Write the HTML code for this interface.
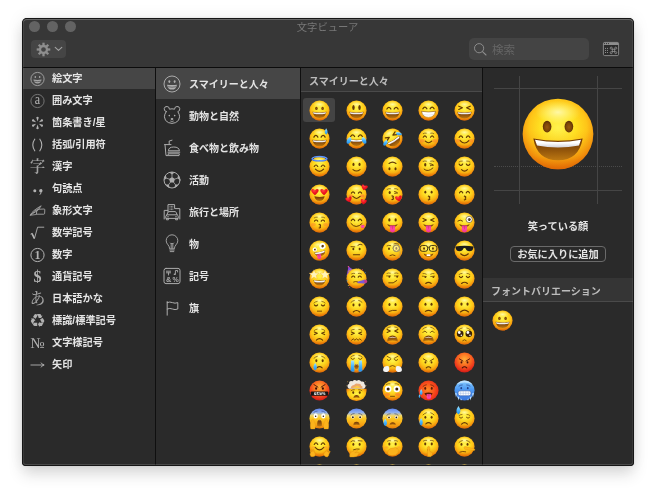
<!DOCTYPE html><html lang="ja"><head><meta charset="utf-8"><title>文字ビューア</title><style>
html,body{margin:0;padding:0;background:#fff;}
body{width:656px;height:492px;overflow:hidden;position:relative;font-family:"Liberation Sans","Noto Sans CJK JP",sans-serif;-webkit-font-smoothing:antialiased;}
#win{position:absolute;left:22px;top:18px;width:612px;height:448px;background:#2a2a2a;border-radius:5px 5px 4px 4px;
 box-shadow:0 9px 15px rgba(0,0,0,.12),0 1px 17px rgba(0,0,0,.085),0 0 3px rgba(0,0,0,.1);overflow:hidden;will-change:transform;}
#win:after{content:"";position:absolute;left:0;top:0;right:0;bottom:0;border-radius:5px 5px 4px 4px;box-shadow:inset 0 0 0 1px #161616;pointer-events:none;}
#win:before{content:"";position:absolute;z-index:5;left:1px;top:1px;right:1px;bottom:1px;border-radius:4px 4px 3px 3px;box-shadow:inset 0 1px 0 rgba(255,255,255,.24),inset 0 -1px 0 rgba(255,255,255,.15),inset 1px 0 0 rgba(255,255,255,.07),inset -1px 0 0 rgba(255,255,255,.07);pointer-events:none;}
#tb{position:absolute;left:0;top:0;width:612px;height:49px;background:#373737;border-bottom:1px solid #0c0c0c;}
.tl{position:absolute;top:3px;width:11px;height:11px;border-radius:50%;background:#636363;}
#title{position:absolute;left:0;width:611px;top:2px;height:16px;line-height:16px;text-align:center;font-size:10.3px;color:#777;}
#gear{position:absolute;left:9px;top:22px;width:35px;height:18px;border-radius:4px;background:#454545;}
#search{position:absolute;left:447px;top:20px;width:120px;height:22px;border-radius:5px;background:#444;}
#search span{position:absolute;left:23px;top:0;line-height:23.5px;font-size:11.6px;color:#656565;}
.col{position:absolute;top:50px;bottom:0;background:#2a2a2a;}
.vd{position:absolute;top:50px;bottom:0;width:1px;background:#0f0f0f;}
.li{position:absolute;left:0;height:22px;width:133px;}
.li.sel{background:#464646;height:21px;}
.li span{position:absolute;left:30px;top:0;line-height:21px;font-size:10.2px;font-weight:bold;color:#e4e4e4;white-space:nowrap;}
.li svg{position:absolute;left:5px;top:1px;}
.mi{position:absolute;left:0;height:32px;width:145px;}
.mi.sel{background:#464646;height:31px;}
.mi span{position:absolute;left:33px;top:0;line-height:33.5px;font-size:10px;font-weight:bold;color:#e4e4e4;white-space:nowrap;}
.mi svg{position:absolute;left:4.8px;top:5.2px;}
.hd{position:absolute;background:#353535;border-bottom:1px solid #4a4a4a;height:23px;line-height:27.5px;overflow:hidden;font-size:10px;font-weight:bold;color:#bcbcbc;}
.em{position:absolute;width:21px;height:21px;}
</style></head><body>
<svg width="0" height="0" style="position:absolute"><defs>
<radialGradient id="gy" cx="50%" cy="41%" r="60%"><stop offset="0" stop-color="#fff24e"/><stop offset="0.42" stop-color="#ffe022"/><stop offset="0.68" stop-color="#fec518"/><stop offset="0.86" stop-color="#f79d10"/><stop offset="1" stop-color="#e8760a"/></radialGradient>
<linearGradient id="gsh" x1="0" y1="0" x2="0" y2="1"><stop offset="0.45" stop-color="#e06a00" stop-opacity="0"/><stop offset="0.8" stop-color="#e06a00" stop-opacity="0.22"/><stop offset="1" stop-color="#d85a00" stop-opacity="0.6"/></linearGradient>
<radialGradient id="ghl" cx="50%" cy="50%" r="50%"><stop offset="0" stop-color="#ffffd0" stop-opacity="0.75"/><stop offset="1" stop-color="#ffff9a" stop-opacity="0"/></radialGradient>
<radialGradient id="gey" cx="50%" cy="55%" r="55%"><stop offset="0" stop-color="#96580c"/><stop offset="0.6" stop-color="#7a4408"/><stop offset="1" stop-color="#552a04"/></radialGradient>
<linearGradient id="gte" x1="0" y1="0" x2="0" y2="1"><stop offset="0.4" stop-color="#ffffff"/><stop offset="1" stop-color="#cfcfd8"/></linearGradient>
<linearGradient id="gm" x1="0" y1="0" x2="0" y2="1"><stop offset="0" stop-color="#713806"/><stop offset="0.5" stop-color="#8f520a"/><stop offset="1" stop-color="#bd7812"/></linearGradient>
<radialGradient id="gr" cx="50%" cy="34%" r="68%"><stop offset="0" stop-color="#ffb03a"/><stop offset="0.4" stop-color="#fb7422"/><stop offset="0.75" stop-color="#ee3a1c"/><stop offset="1" stop-color="#cc1616"/></radialGradient>
<radialGradient id="gro" cx="46%" cy="46%" r="60%"><stop offset="0" stop-color="#ff8a22"/><stop offset="0.55" stop-color="#f8501c"/><stop offset="1" stop-color="#e42318"/></radialGradient>
<linearGradient id="gb" x1="0" y1="0" x2="0" y2="1"><stop offset="0" stop-color="#86ccff"/><stop offset="0.45" stop-color="#4d99f2"/><stop offset="1" stop-color="#3b74dc"/></linearGradient>
<linearGradient id="gf" x1="0" y1="0" x2="0" y2="1"><stop offset="0" stop-color="#5f86f0"/><stop offset="0.2" stop-color="#8fb0ee"/><stop offset="0.36" stop-color="#f3d768"/><stop offset="0.5" stop-color="#fdc820"/><stop offset="0.8" stop-color="#f7a212"/><stop offset="1" stop-color="#e27a0a"/></linearGradient>
<linearGradient id="gt" x1="0" y1="0" x2="0" y2="1"><stop offset="0" stop-color="#a8e6ff"/><stop offset="0.5" stop-color="#4ab6fb"/><stop offset="1" stop-color="#1f8ef0"/></linearGradient>
<linearGradient id="gtg" x1="0" y1="0" x2="0" y2="1"><stop offset="0" stop-color="#e83a8c"/><stop offset="0.5" stop-color="#ff4aa8"/><stop offset="1" stop-color="#f0309a"/></linearGradient>
<radialGradient id="gh" cx="40%" cy="25%" r="75%"><stop offset="0" stop-color="#ff4a40"/><stop offset="0.5" stop-color="#f01522"/><stop offset="1" stop-color="#d40a1a"/></radialGradient>
</defs></svg>
<div id="win">
<div id="tb">
<div class="tl" style="left:7px"></div>
<div class="tl" style="left:25px"></div>
<div class="tl" style="left:43px"></div>
<div id="title">文字ビューア</div>
<div id="gear"><svg width="35" height="18" viewBox="0 0 35 18" style="position:absolute;left:0;top:0"><rect x="11.35" y="2.7" width="2.3" height="4" fill="#8e8e8e" transform="rotate(0 12.5 9.5)"/><rect x="11.35" y="2.7" width="2.3" height="4" fill="#8e8e8e" transform="rotate(45 12.5 9.5)"/><rect x="11.35" y="2.7" width="2.3" height="4" fill="#8e8e8e" transform="rotate(90 12.5 9.5)"/><rect x="11.35" y="2.7" width="2.3" height="4" fill="#8e8e8e" transform="rotate(135 12.5 9.5)"/><rect x="11.35" y="2.7" width="2.3" height="4" fill="#8e8e8e" transform="rotate(180 12.5 9.5)"/><rect x="11.35" y="2.7" width="2.3" height="4" fill="#8e8e8e" transform="rotate(225 12.5 9.5)"/><rect x="11.35" y="2.7" width="2.3" height="4" fill="#8e8e8e" transform="rotate(270 12.5 9.5)"/><rect x="11.35" y="2.7" width="2.3" height="4" fill="#8e8e8e" transform="rotate(315 12.5 9.5)"/><circle cx="12.5" cy="9.5" r="3.5" fill="none" stroke="#8e8e8e" stroke-width="2.3"/><path d="M24.2 7.4 L27.5 10.4 L30.8 7.4" fill="none" stroke="#a2a2a2" stroke-width="1.1" stroke-linecap="round" stroke-linejoin="round"/></svg></div>
<div id="search"><svg width="22" height="22" viewBox="0 0 22 22" style="position:absolute;left:0;top:0"><circle cx="10.1" cy="10.2" r="4.6" fill="none" stroke="#8c8c8c" stroke-width="1"/><path d="M13.5 13.6 L17 17" stroke="#8c8c8c" stroke-width="1.1" stroke-linecap="round"/></svg><span>検索</span></div>
<svg width="18" height="16" viewBox="0 0 18 16" style="position:absolute;left:580px;top:23px"><rect x="1.4" y="1.4" width="15.2" height="13.2" rx="1.3" fill="#2b2b2b" stroke="#8e8e8e" stroke-width="0.9"/><path d="M1.4 2.7 Q1.4 1.4 2.7 1.4 L15.3 1.4 Q16.6 1.4 16.6 2.7 L16.6 4.1 L1.4 4.1Z" fill="#8e8e8e"/><circle cx="2.6" cy="2.6" r="0.55" fill="#2a2a2a"/><circle cx="4.5" cy="2.6" r="0.55" fill="#2a2a2a"/><circle cx="6.4" cy="2.6" r="0.55" fill="#2a2a2a"/><rect x="3.0" y="6.9" width="1" height="1" fill="#8e8e8e"/><rect x="4.95" y="6.9" width="1" height="1" fill="#8e8e8e"/><rect x="3.0" y="8.95" width="1" height="1" fill="#8e8e8e"/><rect x="4.95" y="8.95" width="1" height="1" fill="#8e8e8e"/><rect x="3.0" y="11.0" width="1" height="1" fill="#8e8e8e"/><rect x="4.95" y="11.0" width="1" height="1" fill="#8e8e8e"/><g fill="none" stroke="#8e8e8e" stroke-width="0.85"><rect x="10.3" y="8.2" width="2.4" height="2.4"/><circle cx="9.25" cy="7.15" r="1.05"/><circle cx="13.75" cy="7.15" r="1.05"/><circle cx="9.25" cy="11.65" r="1.05"/><circle cx="13.75" cy="11.65" r="1.05"/></g></svg>
</div>
<div class="col" style="left:0;width:133px">
<div class="li sel" style="top:0px"><svg width="22" height="20" viewBox="0 0 22 20"><circle cx="10.5" cy="10" r="6.6" fill="none" stroke="#a6a6a6" stroke-width="0.9"/><ellipse cx="8.32" cy="8.02" rx="0.79" ry="1.07" fill="#a6a6a6"/><ellipse cx="12.68" cy="8.02" rx="0.79" ry="1.07" fill="#a6a6a6"/><path d="M6.41 10.53 Q10.5 11.32 14.59 10.53 Q13.93 14.62 10.5 14.62 Q7.07 14.62 6.41 10.53Z" fill="#a6a6a6"/><path d="M7.07 12.24 Q10.5 13.04 13.93 12.24" fill="none" stroke="#464646" stroke-width="0.63"/></svg><span>絵文字</span></div>
<div class="li" style="top:22px"><svg width="22" height="20" viewBox="0 0 22 20"><circle cx="10.5" cy="10" r="6.6" fill="none" stroke="#858585" stroke-width="0.8"/><text x="10.5" y="13.5" font-family="'Liberation Serif','Noto Serif CJK SC',serif" font-size="15" font-weight="normal" fill="#b8b8b8" text-anchor="middle" transform="translate(2.1 0) scale(0.8 1)">a</text></svg><span>囲み文字</span></div>
<div class="li" style="top:44px"><svg width="22" height="20" viewBox="0 0 22 20"><path d="M10.50 8.40 L11.75 4.40 Q10.50 3.00 9.25 4.40Z" fill="#b2b2b2"/><path d="M11.89 9.20 L15.97 8.28 Q16.56 6.50 14.72 6.12Z" fill="#b2b2b2"/><path d="M11.89 10.80 L14.72 13.88 Q16.56 13.50 15.97 11.72Z" fill="#b2b2b2"/><path d="M10.50 11.60 L9.25 15.60 Q10.50 17.00 11.75 15.60Z" fill="#b2b2b2"/><path d="M9.11 10.80 L5.03 11.72 Q4.44 13.50 6.28 13.88Z" fill="#b2b2b2"/><path d="M9.11 9.20 L6.28 6.12 Q4.44 6.50 5.03 8.28Z" fill="#b2b2b2"/></svg><span>箇条書き/星</span></div>
<div class="li" style="top:66px"><svg width="22" height="20" viewBox="0 0 22 20"><path d="M8 3.8 Q3.6 10 8 16.2" fill="none" stroke="#b2b2b2" stroke-width="1.1"/><path d="M12.6 3.8 Q17 10 12.6 16.2" fill="none" stroke="#b2b2b2" stroke-width="1.1"/></svg><span>括弧/引用符</span></div>
<div class="li" style="top:88px"><svg width="22" height="20" viewBox="0 0 22 20"><text x="10.5" y="15.4" font-family="'Liberation Serif','Noto Serif CJK SC',serif" font-size="15.5" font-weight="600" fill="#a2a2a2" text-anchor="middle" >字</text></svg><span>漢字</span></div>
<div class="li" style="top:110px"><svg width="22" height="20" viewBox="0 0 22 20"><circle cx="7.8" cy="11.8" r="1.5" fill="#b2b2b2"/><path d="M13.2 10.3 a1.55 1.55 0 1 1 1.5 2.8 q-0.2 1.9 -1.9 2.9 l-0.4 -0.5 q1.2 -1 1.1 -2.2 a1.55 1.55 0 0 1 -0.3 -3Z" fill="#b2b2b2"/></svg><span>句読点</span></div>
<div class="li" style="top:132px"><svg width="22" height="20" viewBox="0 0 22 20"><path d="M9.4 13.2 L9.8 9.6 Q10 8.4 11.2 8.3 L17 8 Q17.8 8 17.8 8.8 L17.6 12.4 Q17.5 13.2 16.8 13.2 Z" fill="none" stroke="#b2b2b2" stroke-width="0.8" stroke-linejoin="round"/><path d="M3.4 14 Q5.4 9.6 14.2 4.8 Q12.6 9 6.2 12.4 Z" fill="none" stroke="#b2b2b2" stroke-width="0.75" stroke-linejoin="round"/><path d="M3.4 14 L13 5.8 M5.6 11.2 L7.4 11.4 M7.6 9.6 L9.4 9.8" stroke="#b2b2b2" stroke-width="0.55"/><path d="M2.8 14.4 L9.6 13.4" stroke="#b2b2b2" stroke-width="0.7"/></svg><span>象形文字</span></div>
<div class="li" style="top:154px"><svg width="22" height="20" viewBox="0 0 22 20"><path d="M3.6 11.2 L5.2 10.4 L7.4 15.6 L10.6 4.2 L17.2 4.2" fill="none" stroke="#b2b2b2" stroke-width="0.9" stroke-linejoin="miter"/><path d="M4.9 10.5 L7.3 15.4" stroke="#b2b2b2" stroke-width="1.6"/></svg><span>数学記号</span></div>
<div class="li" style="top:176px"><svg width="22" height="20" viewBox="0 0 22 20"><circle cx="10.5" cy="10" r="6.6" fill="none" stroke="#b2b2b2" stroke-width="1"/><text x="10.5" y="14" font-family="'Liberation Serif','Noto Serif CJK SC',serif" font-size="12" font-weight="bold" fill="#b2b2b2" text-anchor="middle" >1</text></svg><span>数字</span></div>
<div class="li" style="top:198px"><svg width="22" height="20" viewBox="0 0 22 20"><text x="10.5" y="15.2" font-family="'Liberation Serif','Noto Serif CJK SC',serif" font-size="16" font-weight="bold" fill="#b2b2b2" text-anchor="middle" >$</text></svg><span>通貨記号</span></div>
<div class="li" style="top:220px"><svg width="22" height="20" viewBox="0 0 22 20"><text x="10.5" y="15.4" font-family="'Liberation Serif','Noto Serif CJK SC',serif" font-size="15.5" font-weight="500" fill="#a2a2a2" text-anchor="middle" >あ</text></svg><span>日本語かな</span></div>
<div class="li" style="top:242px"><svg width="22" height="20" viewBox="0 0 22 20"><text x="10.5" y="16.2" font-family="'DejaVu Sans',sans-serif" font-size="18.5" font-weight="normal" fill="#b0b0b0" text-anchor="middle" >♻</text></svg><span>標識/標準記号</span></div>
<div class="li" style="top:264px"><svg width="22" height="20" viewBox="0 0 22 20"><text x="10.5" y="15" font-family="'Liberation Serif','Noto Serif CJK SC',serif" font-size="15" font-weight="normal" fill="#b2b2b2" text-anchor="middle" >№</text></svg><span>文字様記号</span></div>
<div class="li" style="top:286px"><svg width="22" height="20" viewBox="0 0 22 20"><path d="M3.5 10 L17 10 M14 7.6 Q15 9.6 17.2 10 Q15 10.4 14 12.4" fill="none" stroke="#b2b2b2" stroke-width="0.9"/></svg><span>矢印</span></div>
</div><div class="vd" style="left:133px"></div>
<div class="col" style="left:134px;width:144px">
<div class="mi sel" style="top:0px"><svg width="22" height="22" viewBox="0 0 22 22"><circle cx="11" cy="11" r="8" fill="none" stroke="#b0b0b0" stroke-width="0.95"/><ellipse cx="8.36" cy="8.60" rx="0.96" ry="1.30" fill="#b0b0b0"/><ellipse cx="13.64" cy="8.60" rx="0.96" ry="1.30" fill="#b0b0b0"/><path d="M6.04 11.64 Q11 12.60 15.96 11.64 Q15.16 16.60 11 16.60 Q6.84 16.60 6.04 11.64Z" fill="#b0b0b0"/><path d="M6.84 13.72 Q11 14.68 15.16 13.72" fill="none" stroke="#464646" stroke-width="0.6649999999999999"/></svg><span>スマイリーと人々</span></div>
<div class="mi" style="top:32px"><svg width="22" height="22" viewBox="0 0 22 22" fill="none" stroke="#adadad" stroke-width="1" stroke-linejoin="round" stroke-linecap="round"><path d="M5.2 6.6 A2.6 2.6 0 1 1 8.4 4.2 Q11 3.4 13.6 4.2 A2.6 2.6 0 1 1 16.8 6.6 Q18.6 9.4 18.6 11.8 Q18.4 16 14.6 17.6 Q11 19.2 7.4 17.6 Q3.6 16 3.4 11.8 Q3.4 9.4 5.2 6.6Z"/><circle cx="8.3" cy="10.6" r="0.8" fill="#adadad" stroke="none"/><circle cx="13.7" cy="10.6" r="0.8" fill="#adadad" stroke="none"/><ellipse cx="11" cy="14" rx="1.3" ry="0.9" fill="#adadad" stroke="none"/><path d="M9.6 16.2 Q11 17 12.4 16.2" stroke-width="0.8"/></svg><span>動物と自然</span></div>
<div class="mi" style="top:64px"><svg width="22" height="22" viewBox="0 0 22 22" fill="none" stroke="#adadad" stroke-width="1" stroke-linejoin="round" stroke-linecap="round"><path d="M3.6 7.6 L10 7.6 M4 7.6 L5 18.6 L7 18.6 M8.2 7.4 L8.2 4 L11 3.2" /><path d="M7.4 13.4 Q7.6 10 12.8 10 Q18 10 18.4 13.4Z"/><path d="M7 15.2 L18.8 15.2 M7.4 16.8 L18.4 16.8 L18 18.6 L7.8 18.6Z"/></svg><span>食べ物と飲み物</span></div>
<div class="mi" style="top:96px"><svg width="22" height="22" viewBox="0 0 22 22" fill="none" stroke="#adadad" stroke-width="1" stroke-linejoin="round" stroke-linecap="round"><circle cx="11" cy="11" r="8"/><path d="M11.00 7.90 L13.95 10.04 L12.82 13.51 L9.18 13.51 L8.05 10.04Z" fill="#adadad" stroke="none"/><path d="M11.00 7.90 L11.00 5.40" stroke-width="0.8"/><path d="M8.26 3.48 L11.00 5.40 L13.74 3.48 A8 8 0 0 0 8.26 3.48Z" fill="#adadad" stroke="none"/><path d="M13.95 10.04 L16.33 9.27" stroke-width="0.8"/><path d="M17.30 6.07 L16.33 9.27 L19.00 11.28 A8 8 0 0 0 17.30 6.07Z" fill="#adadad" stroke="none"/><path d="M12.82 13.51 L14.29 15.53" stroke-width="0.8"/><path d="M17.63 15.47 L14.29 15.53 L13.21 18.69 A8 8 0 0 0 17.63 15.47Z" fill="#adadad" stroke="none"/><path d="M9.18 13.51 L7.71 15.53" stroke-width="0.8"/><path d="M8.79 18.69 L7.71 15.53 L4.37 15.47 A8 8 0 0 0 8.79 18.69Z" fill="#adadad" stroke="none"/><path d="M8.05 10.04 L5.67 9.27" stroke-width="0.8"/><path d="M3.00 11.28 L5.67 9.27 L4.70 6.07 A8 8 0 0 0 3.00 11.28Z" fill="#adadad" stroke="none"/></svg><span>活動</span></div>
<div class="mi" style="top:128px"><svg width="22" height="22" viewBox="0 0 22 22" fill="none" stroke="#adadad" stroke-width="1" stroke-linejoin="round" stroke-linecap="round"><path d="M3.2 18 L3.2 9.4 L6.8 9.4 M7 11 L7 3.6 L13.6 3.6 L13.6 7.6 L18.8 7.6 L18.8 18" /><path d="M9 5.4h0.1M10.4 5.4h0.1M11.8 5.4h0.1M9 7h0.1M10.4 7h0.1M11.8 7h0.1M9 8.6h0.1M10.4 8.6h0.1M11.8 8.6h0.1" stroke-width="0.9"/><path d="M5.6 14.2 L7 11.2 Q7.2 10.6 8 10.6 L14 10.6 Q14.8 10.6 15 11.2 L16.4 14.2 Q17.2 14.4 17.2 15.2 L17.2 17.4 L4.8 17.4 L4.8 15.2 Q4.8 14.4 5.6 14.2Z M6.4 13.8 L15.6 13.8 M5.4 17.6 L5.4 18.8 L7.4 18.8 L7.4 17.6 M14.6 17.6 L14.6 18.8 L16.6 18.8 L16.6 17.6"/><circle cx="7" cy="15.8" r="0.7" fill="#adadad" stroke="none"/><circle cx="15" cy="15.8" r="0.7" fill="#adadad" stroke="none"/></svg><span>旅行と場所</span></div>
<div class="mi" style="top:160px"><svg width="22" height="22" viewBox="0 0 22 22" fill="none" stroke="#adadad" stroke-width="1" stroke-linejoin="round" stroke-linecap="round"><path d="M8.6 15.4 Q8.6 13.6 7 11.8 A5.8 5.8 0 1 1 15 11.8 Q13.4 13.6 13.4 15.4Z M8.8 17 L13.2 17 M9.2 18.6 L12.8 18.6 M9.4 10 L10.4 11 L11 10 L11.6 11 L12.6 10 M10.2 11.2 L10.2 15.2 M11.8 11.2 L11.8 15.2" stroke-width="0.9"/></svg><span>物</span></div>
<div class="mi" style="top:192px"><svg width="22" height="22" viewBox="0 0 22 22" fill="none" stroke="#adadad" stroke-width="1" stroke-linejoin="round" stroke-linecap="round"><rect x="3" y="3.4" width="16" height="15.2" rx="2"/><path d="M5.4 6.2 L9.6 6.2 M5.4 7.8 L9.6 7.8 M7.5 7.8 L7.5 10" stroke-width="0.9"/><path d="M14.4 9.2 L14.4 5.6 L16.6 5.4 L16.6 7" stroke-width="0.9"/><ellipse cx="13.6" cy="9.3" rx="1" ry="0.8" fill="#adadad" stroke="none"/><text x="7.6" y="16.8" font-family="'Liberation Sans',sans-serif" font-size="7.4" font-weight="bold" fill="#adadad" stroke="none" text-anchor="middle">&amp;</text><text x="14.6" y="16.8" font-family="'Liberation Sans',sans-serif" font-size="7" font-weight="bold" fill="#adadad" stroke="none" text-anchor="middle">%</text></svg><span>記号</span></div>
<div class="mi" style="top:224px"><svg width="22" height="22" viewBox="0 0 22 22" fill="none" stroke="#adadad" stroke-width="1" stroke-linejoin="round" stroke-linecap="round"><path d="M6.2 4.6 L6.2 18.2 M6.2 5.6 Q8.8 4.4 11.4 5.6 Q14 6.8 16.8 5.6 L16.8 12 Q14 13.2 11.4 12 Q8.8 10.8 6.2 12"/></svg><span>旗</span></div>
</div><div class="vd" style="left:278px"></div>
<div class="col" style="left:279px;width:181px">
<div class="hd" style="left:0;top:0;width:173px;padding-left:8px">スマイリーと人々</div>
<div style="position:absolute;left:2px;top:30px;width:32px;height:24px;border-radius:3px;background:#444"></div>
<div class="em" style="left:8.40px;top:31.5px"><svg width="21" height="21" viewBox="0 0 36 36" style="overflow:visible"><circle cx="18" cy="18" r="17.2" fill="url(#gy)"/><circle cx="18" cy="18" r="17.2" fill="url(#gsh)"/><ellipse cx="18" cy="7.4" rx="11" ry="5.6" fill="url(#ghl)"/><ellipse cx="12.7" cy="14.4" rx="2.1" ry="2.9" fill="url(#gey)"/><ellipse cx="23.3" cy="14.4" rx="2.1" ry="2.9" fill="url(#gey)"/><path d="M6 20.2 Q18 22.4 30 20.2 Q28.2 30.799999999999997 18 30.799999999999997 Q7.800000000000001 30.799999999999997 6 20.2Z" fill="url(#gm)"/><path d="M6.8 20.8 Q18 23.0 29.2 20.8 L28.2 23.599999999999998 Q18 25.6 7.8 23.599999999999998Z" fill="url(#gte)"/></svg></div>
<div class="em" style="left:44.65px;top:31.5px"><svg width="21" height="21" viewBox="0 0 36 36" style="overflow:visible"><circle cx="18" cy="18" r="17.2" fill="url(#gy)"/><circle cx="18" cy="18" r="17.2" fill="url(#gsh)"/><ellipse cx="18" cy="7.4" rx="11" ry="5.6" fill="url(#ghl)"/><ellipse cx="12.8" cy="12.8" rx="2.1" ry="4.3" fill="#633806"/><ellipse cx="23.2" cy="12.8" rx="2.1" ry="4.3" fill="#633806"/><path d="M5.800000000000001 20.2 Q18 22.4 30.2 20.2 Q28.369999999999997 31.2 18 31.2 Q7.630000000000001 31.2 5.800000000000001 20.2Z" fill="url(#gm)"/><path d="M6.6000000000000005 20.8 Q18 23.0 29.4 20.8 L28.4 23.599999999999998 Q18 25.6 7.6000000000000005 23.599999999999998Z" fill="url(#gte)"/></svg></div>
<div class="em" style="left:80.90px;top:31.5px"><svg width="21" height="21" viewBox="0 0 36 36" style="overflow:visible"><circle cx="18" cy="18" r="17.2" fill="url(#gy)"/><circle cx="18" cy="18" r="17.2" fill="url(#gsh)"/><ellipse cx="18" cy="7.4" rx="11" ry="5.6" fill="url(#ghl)"/><path d="M8.4 15.4 Q11.8 9.64 15.200000000000001 15.4" fill="none" stroke="#633806" stroke-width="2.2" stroke-linecap="round"/><path d="M20.8 15.4 Q24.2 9.64 27.599999999999998 15.4" fill="none" stroke="#633806" stroke-width="2.2" stroke-linecap="round"/><path d="M5.6 20.2 Q18 22.4 30.4 20.2 Q28.54 31.6 18 31.6 Q7.460000000000001 31.6 5.6 20.2Z" fill="url(#gm)"/><path d="M6.3999999999999995 20.8 Q18 23.0 29.599999999999998 20.8 L28.599999999999998 23.599999999999998 Q18 25.6 7.3999999999999995 23.599999999999998Z" fill="url(#gte)"/></svg></div>
<div class="em" style="left:117.15px;top:31.5px"><svg width="21" height="21" viewBox="0 0 36 36" style="overflow:visible"><circle cx="18" cy="18" r="17.2" fill="url(#gy)"/><circle cx="18" cy="18" r="17.2" fill="url(#gsh)"/><ellipse cx="18" cy="7.4" rx="11" ry="5.6" fill="url(#ghl)"/><path d="M8.4 15.0 Q11.8 9.24 15.200000000000001 15.0" fill="none" stroke="#633806" stroke-width="2.2" stroke-linecap="round"/><path d="M20.8 15.0 Q24.2 9.24 27.599999999999998 15.0" fill="none" stroke="#633806" stroke-width="2.2" stroke-linecap="round"/><path d="M6 19.4 Q18 21.599999999999998 30 19.4 Q28.2 29.799999999999997 18 29.799999999999997 Q7.800000000000001 29.799999999999997 6 19.4Z" fill="#fff" stroke="url(#gm)" stroke-width="0.9"/><path d="M7 24.599999999999998 Q18 26.887999999999998 29 24.599999999999998" fill="none" stroke="#c9c9c9" stroke-width="0.6"/></svg></div>
<div class="em" style="left:153.40px;top:31.5px"><svg width="21" height="21" viewBox="0 0 36 36" style="overflow:visible"><circle cx="18" cy="18" r="17.2" fill="url(#gy)"/><circle cx="18" cy="18" r="17.2" fill="url(#gsh)"/><ellipse cx="18" cy="7.4" rx="11" ry="5.6" fill="url(#ghl)"/><path d="M8.2 10.600000000000001 L14.32 13.4 L8.2 16.2" fill="none" stroke="#633806" stroke-width="2.1" stroke-linecap="round" stroke-linejoin="round"/><path d="M27.799999999999997 10.600000000000001 L21.68 13.4 L27.799999999999997 16.2" fill="none" stroke="#633806" stroke-width="2.1" stroke-linecap="round" stroke-linejoin="round"/><path d="M5.6 20.2 Q18 22.4 30.4 20.2 Q28.54 31.6 18 31.6 Q7.460000000000001 31.6 5.6 20.2Z" fill="url(#gm)"/><path d="M6.3999999999999995 20.8 Q18 23.0 29.599999999999998 20.8 L28.599999999999998 23.599999999999998 Q18 25.6 7.3999999999999995 23.599999999999998Z" fill="url(#gte)"/></svg></div>
<div class="em" style="left:8.40px;top:59.5px"><svg width="21" height="21" viewBox="0 0 36 36" style="overflow:visible"><circle cx="18" cy="18" r="17.2" fill="url(#gy)"/><circle cx="18" cy="18" r="17.2" fill="url(#gsh)"/><ellipse cx="18" cy="7.4" rx="11" ry="5.6" fill="url(#ghl)"/><path d="M8.4 15.6 Q11.8 9.84 15.200000000000001 15.6" fill="none" stroke="#633806" stroke-width="2.2" stroke-linecap="round"/><path d="M20.8 15.6 Q24.2 9.84 27.599999999999998 15.6" fill="none" stroke="#633806" stroke-width="2.2" stroke-linecap="round"/><path d="M5.800000000000001 20.2 Q18 22.4 30.2 20.2 Q28.369999999999997 31.4 18 31.4 Q7.630000000000001 31.4 5.800000000000001 20.2Z" fill="url(#gm)"/><path d="M6.6000000000000005 20.8 Q18 23.0 29.4 20.8 L28.4 23.599999999999998 Q18 25.6 7.6000000000000005 23.599999999999998Z" fill="url(#gte)"/><path d="M29.4 0.6 Q34.36 7.7299999999999995 29.4 11.45 Q24.439999999999998 7.7299999999999995 29.4 0.6Z" fill="url(#gt)"/></svg></div>
<div class="em" style="left:44.65px;top:59.5px"><svg width="21" height="21" viewBox="0 0 36 36" style="overflow:visible"><circle cx="18" cy="18" r="17.2" fill="url(#gy)"/><circle cx="18" cy="18" r="17.2" fill="url(#gsh)"/><ellipse cx="18" cy="7.4" rx="11" ry="5.6" fill="url(#ghl)"/><path d="M8.0 14.6 Q11.4 8.84 14.8 14.6" fill="none" stroke="#633806" stroke-width="2.2" stroke-linecap="round"/><path d="M21.200000000000003 14.6 Q24.6 8.84 28.0 14.6" fill="none" stroke="#633806" stroke-width="2.2" stroke-linecap="round"/><path d="M6.6 19.2 Q18 21.4 29.4 19.2 Q27.689999999999998 30.799999999999997 18 30.799999999999997 Q8.31 30.799999999999997 6.6 19.2Z" fill="url(#gm)"/><path d="M7.3999999999999995 19.8 Q18 22.0 28.599999999999998 19.8 L27.599999999999998 22.599999999999998 Q18 24.6 8.4 22.599999999999998Z" fill="url(#gte)"/><path d="M7.5 15.5 Q2 17 1 23.5 Q0.5 27.5 4 27 Q8 26 9.5 19Z" fill="url(#gt)"/><path d="M28.5 15.5 Q34 17 35 23.5 Q35.5 27.5 32 27 Q28 26 26.5 19Z" fill="url(#gt)"/></svg></div>
<div class="em" style="left:80.90px;top:59.5px"><svg width="21" height="21" viewBox="0 0 36 36" style="overflow:visible"><g transform="rotate(-32 18 18)"><circle cx="18" cy="18" r="17.2" fill="url(#gy)"/><circle cx="18" cy="18" r="17.2" fill="url(#gsh)"/><ellipse cx="18" cy="7.4" rx="11" ry="5.6" fill="url(#ghl)"/><path d="M8.2 10.600000000000001 L14.32 13.4 L8.2 16.2" fill="none" stroke="#633806" stroke-width="2.1" stroke-linecap="round" stroke-linejoin="round"/><path d="M27.799999999999997 10.600000000000001 L21.68 13.4 L27.799999999999997 16.2" fill="none" stroke="#633806" stroke-width="2.1" stroke-linecap="round" stroke-linejoin="round"/><path d="M5.800000000000001 20 Q18 22.2 30.2 20 Q28.369999999999997 31.4 18 31.4 Q7.630000000000001 31.4 5.800000000000001 20Z" fill="url(#gm)"/><path d="M6.6000000000000005 20.6 Q18 22.8 29.4 20.6 L28.4 23.4 Q18 25.4 7.6000000000000005 23.4Z" fill="url(#gte)"/></g><path d="M23.5 7.5 Q30 5.5 33.5 9.5 Q35 12 32.5 12.5 Q28 13 25 11Z" fill="url(#gt)"/><path d="M8 20 Q3 22 2 27.5 Q2 31 5 30 Q9 28.5 10 23Z" fill="url(#gt)"/></svg></div>
<div class="em" style="left:117.15px;top:59.5px"><svg width="21" height="21" viewBox="0 0 36 36" style="overflow:visible"><circle cx="18" cy="18" r="17.2" fill="url(#gy)"/><circle cx="18" cy="18" r="17.2" fill="url(#gsh)"/><ellipse cx="18" cy="7.4" rx="11" ry="5.6" fill="url(#ghl)"/><ellipse cx="7.6" cy="22" rx="4.4" ry="3" fill="#ff6a3a" opacity="0.42"/><ellipse cx="28.4" cy="22" rx="4.4" ry="3" fill="#ff6a3a" opacity="0.42"/><path d="M9.0 15.799999999999999 Q11.8 11.48 14.600000000000001 15.799999999999999" fill="none" stroke="#633806" stroke-width="2.0" stroke-linecap="round"/><path d="M21.4 15.799999999999999 Q24.2 11.48 27.0 15.799999999999999" fill="none" stroke="#633806" stroke-width="2.0" stroke-linecap="round"/><path d="M9.0 9.6 Q11.6 7.999999999999999 14.2 8.799999999999999" fill="none" stroke="#633806" stroke-width="1.1" stroke-linecap="round"/><path d="M27.0 9.6 Q24.4 7.999999999999999 21.799999999999997 8.799999999999999" fill="none" stroke="#633806" stroke-width="1.1" stroke-linecap="round"/><path d="M12.6 22.5 Q18 28.1 23.4 22.5" fill="none" stroke="#633806" stroke-width="1.9" stroke-linecap="round"/></svg></div>
<div class="em" style="left:153.40px;top:59.5px"><svg width="21" height="21" viewBox="0 0 36 36" style="overflow:visible"><circle cx="18" cy="18" r="17.2" fill="url(#gy)"/><circle cx="18" cy="18" r="17.2" fill="url(#gsh)"/><ellipse cx="18" cy="7.4" rx="11" ry="5.6" fill="url(#ghl)"/><ellipse cx="7.4" cy="22" rx="4.4" ry="3" fill="#ff6a3a" opacity="0.42"/><ellipse cx="28.6" cy="22" rx="4.4" ry="3" fill="#ff6a3a" opacity="0.42"/><path d="M8.8 16.1 Q11.8 10.7 14.8 16.1" fill="none" stroke="#633806" stroke-width="2.0" stroke-linecap="round"/><path d="M21.2 16.1 Q24.2 10.7 27.2 16.1" fill="none" stroke="#633806" stroke-width="2.0" stroke-linecap="round"/><path d="M10.6 21.5 Q18 29.9 25.4 21.5" fill="none" stroke="#633806" stroke-width="1.9" stroke-linecap="round"/></svg></div>
<div class="em" style="left:8.40px;top:87.5px"><svg width="21" height="21" viewBox="0 0 36 36" style="overflow:visible"><circle cx="18" cy="18" r="17.2" fill="url(#gy)"/><circle cx="18" cy="18" r="17.2" fill="url(#gsh)"/><ellipse cx="18" cy="7.4" rx="11" ry="5.6" fill="url(#ghl)"/><path d="M9 17.9 Q12 12.86 15 17.9" fill="none" stroke="#633806" stroke-width="2.0" stroke-linecap="round"/><path d="M21 17.9 Q24 12.86 27 17.9" fill="none" stroke="#633806" stroke-width="2.0" stroke-linecap="round"/><path d="M11 22.5 Q18 30.1 25 22.5" fill="none" stroke="#633806" stroke-width="1.9" stroke-linecap="round"/><ellipse cx="18" cy="4.6" rx="12.6" ry="3.6" fill="none" stroke="#3c6cf0" stroke-width="2.6"/><ellipse cx="18" cy="4.4" rx="12.6" ry="3.4" fill="none" stroke="#8fd0ff" stroke-width="0.9"/></svg></div>
<div class="em" style="left:44.65px;top:87.5px"><svg width="21" height="21" viewBox="0 0 36 36" style="overflow:visible"><circle cx="18" cy="18" r="17.2" fill="url(#gy)"/><circle cx="18" cy="18" r="17.2" fill="url(#gsh)"/><ellipse cx="18" cy="7.4" rx="11" ry="5.6" fill="url(#ghl)"/><ellipse cx="12.8" cy="14.4" rx="1.8" ry="2.7" fill="#633806"/><ellipse cx="23.2" cy="14.4" rx="1.8" ry="2.7" fill="#633806"/><path d="M12 23.4 Q18 28.2 24 23.4" fill="none" stroke="#633806" stroke-width="1.9" stroke-linecap="round"/></svg></div>
<div class="em" style="left:80.90px;top:87.5px"><svg width="21" height="21" viewBox="0 0 36 36" style="overflow:visible"><circle cx="18" cy="18" r="17.2" fill="url(#gy)"/><circle cx="18" cy="18" r="17.2" fill="url(#gsh)"/><ellipse cx="18" cy="7.4" rx="11" ry="5.6" fill="url(#ghl)"/><ellipse cx="12.8" cy="21.8" rx="1.8" ry="2.7" fill="#633806"/><ellipse cx="23.2" cy="21.8" rx="1.8" ry="2.7" fill="#633806"/><path d="M12 12.8 Q18 8.0 24 12.8" fill="none" stroke="#633806" stroke-width="1.9" stroke-linecap="round"/></svg></div>
<div class="em" style="left:117.15px;top:87.5px"><svg width="21" height="21" viewBox="0 0 36 36" style="overflow:visible"><circle cx="18" cy="18" r="17.2" fill="url(#gy)"/><circle cx="18" cy="18" r="17.2" fill="url(#gsh)"/><ellipse cx="18" cy="7.4" rx="11" ry="5.6" fill="url(#ghl)"/><ellipse cx="12.4" cy="15" rx="1.9" ry="2.8" fill="#633806"/><path d="M20.4 13.2 Q24.4 13.6 26.6 15.8 Q23.6 15.6 21.2 16.6" fill="none" stroke="#633806" stroke-width="1.6" stroke-linecap="round" stroke-linejoin="round"/><path d="M8.8 9.2 Q11.6 7.8 14.399999999999999 8.8" fill="none" stroke="#633806" stroke-width="1.1" stroke-linecap="round"/><path d="M27.2 9.2 Q24.4 7.8 21.599999999999998 8.8" fill="none" stroke="#633806" stroke-width="1.1" stroke-linecap="round"/><path d="M10.5 22.6 Q17 28.5 25.5 20.6" fill="none" stroke="#633806" stroke-width="1.6" stroke-linecap="round"/></svg></div>
<div class="em" style="left:153.40px;top:87.5px"><svg width="21" height="21" viewBox="0 0 36 36" style="overflow:visible"><circle cx="18" cy="18" r="17.2" fill="url(#gy)"/><circle cx="18" cy="18" r="17.2" fill="url(#gsh)"/><ellipse cx="18" cy="7.4" rx="11" ry="5.6" fill="url(#ghl)"/><path d="M8.8 13.899999999999999 Q11.8 18.58 14.8 13.899999999999999" fill="none" stroke="#633806" stroke-width="2.0" stroke-linecap="round"/><path d="M21.2 13.899999999999999 Q24.2 18.58 27.2 13.899999999999999" fill="none" stroke="#633806" stroke-width="2.0" stroke-linecap="round"/><path d="M8.600000000000001 10.200000000000001 Q11.4 8.200000000000001 14.2 8.6" fill="none" stroke="#633806" stroke-width="1.1" stroke-linecap="round"/><path d="M27.400000000000002 10.200000000000001 Q24.6 8.200000000000001 21.8 8.6" fill="none" stroke="#633806" stroke-width="1.1" stroke-linecap="round"/><path d="M13 23.4 Q18 28.599999999999998 23 23.4" fill="none" stroke="#633806" stroke-width="1.9" stroke-linecap="round"/></svg></div>
<div class="em" style="left:8.40px;top:115.5px"><svg width="21" height="21" viewBox="0 0 36 36" style="overflow:visible"><circle cx="18" cy="18" r="17.2" fill="url(#gy)"/><circle cx="18" cy="18" r="17.2" fill="url(#gsh)"/><ellipse cx="18" cy="7.4" rx="11" ry="5.6" fill="url(#ghl)"/><path d="M10.2 19.35 C-0.3000000000000007 12.0 4.249999999999999 5.350000000000001 10.2 10.6 C16.15 5.350000000000001 20.7 12.0 10.2 19.35Z" fill="url(#gh)"/><path d="M25.8 19.35 C15.3 12.0 19.85 5.350000000000001 25.8 10.6 C31.75 5.350000000000001 36.3 12.0 25.8 19.35Z" fill="url(#gh)"/><path d="M9.2 21 Q18 23.2 26.8 21 Q25.48 29.2 18 29.2 Q10.52 29.2 9.2 21Z" fill="url(#gm)"/></svg></div>
<div class="em" style="left:44.65px;top:115.5px"><svg width="21" height="21" viewBox="0 0 36 36" style="overflow:visible"><circle cx="18" cy="18" r="17.2" fill="url(#gy)"/><circle cx="18" cy="18" r="17.2" fill="url(#gsh)"/><ellipse cx="18" cy="7.4" rx="11" ry="5.6" fill="url(#ghl)"/><ellipse cx="8.4" cy="20.5" rx="4" ry="2.8" fill="#ff6a3a" opacity="0.55"/><ellipse cx="27.6" cy="20.5" rx="4" ry="2.8" fill="#ff6a3a" opacity="0.55"/><path d="M9.2 15.700000000000001 Q12 11.02 14.8 15.700000000000001" fill="none" stroke="#633806" stroke-width="2.0" stroke-linecap="round"/><path d="M21.2 15.700000000000001 Q24 11.02 26.8 15.700000000000001" fill="none" stroke="#633806" stroke-width="2.0" stroke-linecap="round"/><path d="M11.8 21.4 Q18 28.2 24.2 21.4" fill="none" stroke="#633806" stroke-width="1.9" stroke-linecap="round"/><path transform="rotate(15 31.6 5.6)" d="M31.6 10.7 C22.6 4.3999999999999995 26.5 -1.2999999999999998 31.6 3.1999999999999993 C36.7 -1.2999999999999998 40.6 4.3999999999999995 31.6 10.7Z" fill="url(#gh)"/><path transform="rotate(-15 4.8 26.4)" d="M4.8 31.5 C-4.2 25.2 -0.2999999999999998 19.5 4.8 24.0 C9.899999999999999 19.5 13.8 25.2 4.8 31.5Z" fill="url(#gh)"/><path transform="rotate(10 30.2 30.2)" d="M30.2 35.129999999999995 C21.5 29.04 25.27 23.53 30.2 27.88 C35.129999999999995 23.53 38.9 29.04 30.2 35.129999999999995Z" fill="url(#gh)"/></svg></div>
<div class="em" style="left:80.90px;top:115.5px"><svg width="21" height="21" viewBox="0 0 36 36" style="overflow:visible"><circle cx="18" cy="18" r="17.2" fill="url(#gy)"/><circle cx="18" cy="18" r="17.2" fill="url(#gsh)"/><ellipse cx="18" cy="7.4" rx="11" ry="5.6" fill="url(#ghl)"/><ellipse cx="13.2" cy="14.6" rx="1.8" ry="2.6" fill="#633806"/><path d="M21.4 13 Q24.8 13.2 26.8 15.4 Q24 15.2 21.8 16.2" fill="none" stroke="#633806" stroke-width="1.5" stroke-linecap="round" stroke-linejoin="round"/><path d="M8.8 9.2 Q11.6 7.3999999999999995 14.399999999999999 8.0" fill="none" stroke="#633806" stroke-width="1.1" stroke-linecap="round"/><path d="M27.2 9.2 Q24.4 7.3999999999999995 21.599999999999998 8.0" fill="none" stroke="#633806" stroke-width="1.1" stroke-linecap="round"/><path d="M17.1 20.400000000000002 Q21.200000000000003 21.200000000000003 18.6 23.6 Q21.200000000000003 26.0 17.1 26.8" fill="none" stroke="#633806" stroke-width="2" stroke-linecap="round" stroke-linejoin="round"/><path transform="rotate(-12 28.6 24.6)" d="M28.6 30.040000000000003 C19.0 23.32 23.16 17.240000000000002 28.6 22.04 C34.04 17.240000000000002 38.2 23.32 28.6 30.040000000000003Z" fill="url(#gh)"/></svg></div>
<div class="em" style="left:117.15px;top:115.5px"><svg width="21" height="21" viewBox="0 0 36 36" style="overflow:visible"><circle cx="18" cy="18" r="17.2" fill="url(#gy)"/><circle cx="18" cy="18" r="17.2" fill="url(#gsh)"/><ellipse cx="18" cy="7.4" rx="11" ry="5.6" fill="url(#ghl)"/><ellipse cx="12.6" cy="14" rx="1.7" ry="2.4" fill="#633806"/><ellipse cx="23.4" cy="14" rx="1.7" ry="2.4" fill="#633806"/><path d="M17.7 20.8 Q21.8 21.6 19.2 24 Q21.8 26.4 17.7 27.2" fill="none" stroke="#633806" stroke-width="2" stroke-linecap="round" stroke-linejoin="round"/></svg></div>
<div class="em" style="left:153.40px;top:115.5px"><svg width="21" height="21" viewBox="0 0 36 36" style="overflow:visible"><circle cx="18" cy="18" r="17.2" fill="url(#gy)"/><circle cx="18" cy="18" r="17.2" fill="url(#gsh)"/><ellipse cx="18" cy="7.4" rx="11" ry="5.6" fill="url(#ghl)"/><path d="M9.399999999999999 15.200000000000001 Q12.2 10.16 15.0 15.200000000000001" fill="none" stroke="#633806" stroke-width="2.0" stroke-linecap="round"/><path d="M21.0 15.200000000000001 Q23.8 10.16 26.6 15.200000000000001" fill="none" stroke="#633806" stroke-width="2.0" stroke-linecap="round"/><path d="M17.7 20.8 Q21.8 21.6 19.2 24 Q21.8 26.4 17.7 27.2" fill="none" stroke="#633806" stroke-width="2" stroke-linecap="round" stroke-linejoin="round"/></svg></div>
<div class="em" style="left:8.40px;top:143.5px"><svg width="21" height="21" viewBox="0 0 36 36" style="overflow:visible"><circle cx="18" cy="18" r="17.2" fill="url(#gy)"/><circle cx="18" cy="18" r="17.2" fill="url(#gsh)"/><ellipse cx="18" cy="7.4" rx="11" ry="5.6" fill="url(#ghl)"/><ellipse cx="7.800000000000001" cy="21.4" rx="4" ry="2.8" fill="#ff6a3a" opacity="0.32"/><ellipse cx="28.2" cy="21.4" rx="4" ry="2.8" fill="#ff6a3a" opacity="0.32"/><path d="M9.399999999999999 15.7 Q12.2 11.739999999999998 15.0 15.7" fill="none" stroke="#633806" stroke-width="2.0" stroke-linecap="round"/><path d="M21.0 15.7 Q23.8 11.739999999999998 26.6 15.7" fill="none" stroke="#633806" stroke-width="2.0" stroke-linecap="round"/><path d="M9.0 10.0 Q11.6 8.200000000000001 14.2 8.8" fill="none" stroke="#633806" stroke-width="1.1" stroke-linecap="round"/><path d="M27.0 10.0 Q24.4 8.200000000000001 21.799999999999997 8.8" fill="none" stroke="#633806" stroke-width="1.1" stroke-linecap="round"/><path d="M17.3 21.0 Q21.400000000000002 21.8 18.8 24.2 Q21.400000000000002 26.599999999999998 17.3 27.4" fill="none" stroke="#633806" stroke-width="2" stroke-linecap="round" stroke-linejoin="round"/></svg></div>
<div class="em" style="left:44.65px;top:143.5px"><svg width="21" height="21" viewBox="0 0 36 36" style="overflow:visible"><circle cx="18" cy="18" r="17.2" fill="url(#gy)"/><circle cx="18" cy="18" r="17.2" fill="url(#gsh)"/><ellipse cx="18" cy="7.4" rx="11" ry="5.6" fill="url(#ghl)"/><path d="M9 14.9 Q12 9.5 15 14.9" fill="none" stroke="#633806" stroke-width="2.0" stroke-linecap="round"/><path d="M21 14.9 Q24 9.5 27 14.9" fill="none" stroke="#633806" stroke-width="2.0" stroke-linecap="round"/><path d="M8.4 19.6 Q17 30.5 27.6 19.6" fill="none" stroke="#633806" stroke-width="1.7" stroke-linecap="round"/><path d="M24.6 24.4 Q29 20.6 31.4 23 Q33 25.6 29.6 27.4 Q26.6 28.4 24.6 24.4Z" fill="url(#gtg)"/></svg></div>
<div class="em" style="left:80.90px;top:143.5px"><svg width="21" height="21" viewBox="0 0 36 36" style="overflow:visible"><circle cx="18" cy="18" r="17.2" fill="url(#gy)"/><circle cx="18" cy="18" r="17.2" fill="url(#gsh)"/><ellipse cx="18" cy="7.4" rx="11" ry="5.6" fill="url(#ghl)"/><ellipse cx="12.6" cy="13.6" rx="1.9" ry="2.8" fill="#633806"/><ellipse cx="23.4" cy="13.6" rx="1.9" ry="2.8" fill="#633806"/><path d="M9 21 Q18 24.4 27 21 Q25 26 18 26 Q11 26 9 21Z" fill="url(#gm)"/><path d="M13.6 23.2 L22.4 23.2 L22.4 30.200000000000003 A4.4 4.4 0 0 1 13.6 30.200000000000003Z" fill="url(#gtg)"/><path d="M18 23.8 L18 29.47" stroke="#c4245e" stroke-width="0.7"/></svg></div>
<div class="em" style="left:117.15px;top:143.5px"><svg width="21" height="21" viewBox="0 0 36 36" style="overflow:visible"><circle cx="18" cy="18" r="17.2" fill="url(#gy)"/><circle cx="18" cy="18" r="17.2" fill="url(#gsh)"/><ellipse cx="18" cy="7.4" rx="11" ry="5.6" fill="url(#ghl)"/><path d="M8.600000000000001 11.0 L14.360000000000001 13.6 L8.600000000000001 16.2" fill="none" stroke="#633806" stroke-width="1.9" stroke-linecap="round" stroke-linejoin="round"/><path d="M27.4 11.0 L21.64 13.6 L27.4 16.2" fill="none" stroke="#633806" stroke-width="1.9" stroke-linecap="round" stroke-linejoin="round"/><path d="M9 21 Q18 24.4 27 21 Q25 26 18 26 Q11 26 9 21Z" fill="url(#gm)"/><path d="M13.6 23.2 L22.4 23.2 L22.4 30.200000000000003 A4.4 4.4 0 0 1 13.6 30.200000000000003Z" fill="url(#gtg)"/><path d="M18 23.8 L18 29.47" stroke="#c4245e" stroke-width="0.7"/></svg></div>
<div class="em" style="left:153.40px;top:143.5px"><svg width="21" height="21" viewBox="0 0 36 36" style="overflow:visible"><circle cx="18" cy="18" r="17.2" fill="url(#gy)"/><circle cx="18" cy="18" r="17.2" fill="url(#gsh)"/><ellipse cx="18" cy="7.4" rx="11" ry="5.6" fill="url(#ghl)"/><path d="M6.6 15.4 Q10.6 12 14.6 15.4" fill="none" stroke="#633806" stroke-width="1.7" stroke-linecap="round"/><circle cx="26" cy="12.8" r="5.4" fill="#fff" stroke="#3a2a12" stroke-width="0.9"/><circle cx="26.2" cy="13" r="2.4" fill="#2a1a08"/><circle cx="25.6" cy="12.4" r="0.8" fill="#fff"/><path d="M9 21 Q18 24.4 27 21 Q25 26 18 26 Q11 26 9 21Z" fill="url(#gm)"/><path d="M13.6 23.2 L22.4 23.2 L22.4 30.200000000000003 A4.4 4.4 0 0 1 13.6 30.200000000000003Z" fill="url(#gtg)"/><path d="M18 23.8 L18 29.47" stroke="#c4245e" stroke-width="0.7"/></svg></div>
<div class="em" style="left:8.40px;top:171.5px"><svg width="21" height="21" viewBox="0 0 36 36" style="overflow:visible"><g transform="rotate(-12 18 18)"><circle cx="18" cy="18" r="17.2" fill="url(#gy)"/><circle cx="18" cy="18" r="17.2" fill="url(#gsh)"/><ellipse cx="18" cy="7.4" rx="11" ry="5.6" fill="url(#ghl)"/><circle cx="10.4" cy="14.6" r="3.6" fill="#fff"/><circle cx="10.6" cy="14.8" r="1.6" fill="#633806"/><circle cx="24.6" cy="11.6" r="5.4" fill="#fff"/><circle cx="24.8" cy="11.8" r="2.2" fill="#633806"/><path d="M8.4 19.4 Q18 21.599999999999998 27.6 19.4 Q26.16 28.0 18 28.0 Q9.84 28.0 8.4 19.4Z" fill="url(#gm)"/><path d="M9.200000000000001 20.0 Q18 22.2 26.8 20.0 L25.8 22.799999999999997 Q18 24.799999999999997 10.200000000000001 22.799999999999997Z" fill="url(#gte)"/><path d="M12.0 24 L18.8 24 L18.8 29.0 A3.4 3.4 0 0 1 12.0 29.0Z" fill="url(#gtg)"/><path d="M15.4 24.6 L15.4 28.62" stroke="#c4245e" stroke-width="0.7"/></g></svg></div>
<div class="em" style="left:44.65px;top:171.5px"><svg width="21" height="21" viewBox="0 0 36 36" style="overflow:visible"><circle cx="18" cy="18" r="17.2" fill="url(#gy)"/><circle cx="18" cy="18" r="17.2" fill="url(#gsh)"/><ellipse cx="18" cy="7.4" rx="11" ry="5.6" fill="url(#ghl)"/><ellipse cx="12.6" cy="15.4" rx="1.7" ry="2.3" fill="#633806"/><ellipse cx="23.4" cy="15.4" rx="1.7" ry="2.3" fill="#633806"/><path d="M12.6 25.4 L23.4 25.4" fill="none" stroke="#633806" stroke-width="1.9" stroke-linecap="round"/><path d="M8.6 11.4 L15 11.8" stroke="#633806" stroke-width="1.5" stroke-linecap="round"/><path d="M20.4 9 Q24 5.4 27.6 8" fill="none" stroke="#633806" stroke-width="1.5" stroke-linecap="round"/></svg></div>
<div class="em" style="left:80.90px;top:171.5px"><svg width="21" height="21" viewBox="0 0 36 36" style="overflow:visible"><circle cx="18" cy="18" r="17.2" fill="url(#gy)"/><circle cx="18" cy="18" r="17.2" fill="url(#gsh)"/><ellipse cx="18" cy="7.4" rx="11" ry="5.6" fill="url(#ghl)"/><ellipse cx="12" cy="15" rx="1.6" ry="2.2" fill="#633806"/><ellipse cx="24.6" cy="14.4" rx="1.6" ry="2.2" fill="#633806"/><circle cx="24.6" cy="14.2" r="5.6" fill="#fff" fill-opacity="0.4" stroke="#5a4a2a" stroke-width="1.7"/><circle cx="24.6" cy="14.2" r="5.6" fill="none" stroke="#e6d4a0" stroke-width="0.9"/><path d="M30 15 Q32 22 30.4 30" fill="none" stroke="#8c8c8c" stroke-width="0.7"/><path d="M8.6 10 Q11.4 8.2 14.8 9.6" fill="none" stroke="#633806" stroke-width="1.3" stroke-linecap="round"/><path d="M20.6 6.6 Q24.6 4.6 28.4 7" fill="none" stroke="#633806" stroke-width="1.3" stroke-linecap="round"/><path d="M13.6 26.6 Q18 23.8 22.4 26.6" fill="none" stroke="#633806" stroke-width="1.5" stroke-linecap="round"/></svg></div>
<div class="em" style="left:117.15px;top:171.5px"><svg width="21" height="21" viewBox="0 0 36 36" style="overflow:visible"><circle cx="18" cy="18" r="17.2" fill="url(#gy)"/><circle cx="18" cy="18" r="17.2" fill="url(#gsh)"/><ellipse cx="18" cy="7.4" rx="11" ry="5.6" fill="url(#ghl)"/><rect x="3.6" y="9.4" width="13" height="10" rx="4" fill="#fff" fill-opacity="0.14" stroke="#1e1408" stroke-width="1.4"/><rect x="19.4" y="9.4" width="13" height="10" rx="4" fill="#fff" fill-opacity="0.14" stroke="#1e1408" stroke-width="1.4"/><path d="M16.4 13 Q18 12 19.6 13" fill="none" stroke="#3a2a12" stroke-width="1.4"/><ellipse cx="10.4" cy="14.6" rx="1.6" ry="2.2" fill="#633806"/><ellipse cx="25.6" cy="14.6" rx="1.6" ry="2.2" fill="#633806"/><path d="M9.6 23 Q18 27 26.4 23 Q24.6 29 18 29 Q11.4 29 9.6 23Z" fill="url(#gm)"/><rect x="14.8" y="24.6" width="6.4" height="3" rx="0.6" fill="#fff"/></svg></div>
<div class="em" style="left:153.40px;top:171.5px"><svg width="21" height="21" viewBox="0 0 36 36" style="overflow:visible"><circle cx="18" cy="18" r="17.2" fill="url(#gy)"/><circle cx="18" cy="18" r="17.2" fill="url(#gsh)"/><ellipse cx="18" cy="7.4" rx="11" ry="5.6" fill="url(#ghl)"/><path d="M2.4 11 Q18 9 33.6 11 L33.2 13.4 Q32.4 19.4 26.4 19.4 Q21.4 19.4 19.6 14.2 Q18 13.2 16.4 14.2 Q14.6 19.4 9.6 19.4 Q3.6 19.4 2.8 13.4Z" fill="#1c1c1c"/><path d="M11.4 23.6 Q18 30.0 24.6 23.6" fill="none" stroke="#633806" stroke-width="1.9" stroke-linecap="round"/></svg></div>
<div class="em" style="left:8.40px;top:199.5px"><svg width="21" height="21" viewBox="0 0 36 36" style="overflow:visible"><circle cx="18" cy="18" r="17.2" fill="url(#gy)"/><circle cx="18" cy="18" r="17.2" fill="url(#gsh)"/><ellipse cx="18" cy="7.4" rx="11" ry="5.6" fill="url(#ghl)"/><path d="M7.6 20.4 Q18 22.599999999999998 28.4 20.4 Q26.84 29.799999999999997 18 29.799999999999997 Q9.16 29.799999999999997 7.6 20.4Z" fill="url(#gm)"/><path d="M8.4 21.0 Q18 23.2 27.599999999999998 21.0 L26.599999999999998 23.799999999999997 Q18 25.799999999999997 9.4 23.799999999999997Z" fill="url(#gte)"/><path d="M8.60 2.80 L10.93 8.40 L16.97 8.88 L12.37 12.82 L13.77 18.72 L8.60 15.56 L3.43 18.72 L4.83 12.82 L0.23 8.88 L6.27 8.40Z" fill="#fff4b8" stroke="#f2a31c" stroke-width="0.5"/><path d="M27.40 2.80 L29.73 8.40 L35.77 8.88 L31.17 12.82 L32.57 18.72 L27.40 15.56 L22.23 18.72 L23.63 12.82 L19.03 8.88 L25.07 8.40Z" fill="#fff4b8" stroke="#f2a31c" stroke-width="0.5"/></svg></div>
<div class="em" style="left:44.65px;top:199.5px"><svg width="21" height="21" viewBox="0 0 36 36" style="overflow:visible"><path d="M1 13.6 L4.4 -2.4 L15.6 5.6Z" fill="#8a4be0"/><path d="M3.2 6.4 L9.6 2" stroke="#f0c030" stroke-width="1.1"/><circle cx="4.2" cy="-2.2" r="1.3" fill="#e84a9a"/><circle cx="18" cy="18" r="17.2" fill="url(#gy)"/><circle cx="18" cy="18" r="17.2" fill="url(#gsh)"/><ellipse cx="18" cy="7.4" rx="11" ry="5.6" fill="url(#ghl)"/><path d="M9.8 15.7 Q12.4 11.739999999999998 15.0 15.7" fill="none" stroke="#633806" stroke-width="2.0" stroke-linecap="round"/><path d="M21.0 15.7 Q23.6 11.739999999999998 26.200000000000003 15.7" fill="none" stroke="#633806" stroke-width="2.0" stroke-linecap="round"/><path d="M9.6 10.0 Q12.2 8.4 14.799999999999999 9.2" fill="none" stroke="#633806" stroke-width="1.1" stroke-linecap="round"/><path d="M26.400000000000002 10.0 Q23.8 8.4 21.2 9.2" fill="none" stroke="#633806" stroke-width="1.1" stroke-linecap="round"/><path d="M19 23.6 L33 19.6 L34 26.4 L20 26Z" fill="#7a58d6"/><circle cx="33.6" cy="23" r="2.8" fill="#c23a8a"/><path d="M13 24 Q16 22.4 19.6 23.6" fill="none" stroke="#633806" stroke-width="1.4" stroke-linecap="round"/><circle cx="28" cy="3" r="1" fill="#f04a6a"/><circle cx="33" cy="8" r="0.9" fill="#3fa0f0"/><circle cx="2" cy="22" r="0.9" fill="#3fa0f0"/><circle cx="4" cy="30" r="0.9" fill="#f0c030"/><circle cx="22" cy="1" r="0.8" fill="#f0c030"/><circle cx="6" cy="33" r="0.8" fill="#f04a6a"/></svg></div>
<div class="em" style="left:80.90px;top:199.5px"><svg width="21" height="21" viewBox="0 0 36 36" style="overflow:visible"><circle cx="18" cy="18" r="17.2" fill="url(#gy)"/><circle cx="18" cy="18" r="17.2" fill="url(#gsh)"/><ellipse cx="18" cy="7.4" rx="11" ry="5.6" fill="url(#ghl)"/><path d="M8 13.6 L14.6 13.6" stroke="#633806" stroke-width="1.2" stroke-linecap="round"/><path d="M21.4 13.6 L28 13.6" stroke="#633806" stroke-width="1.2" stroke-linecap="round"/><ellipse cx="12.6" cy="15" rx="1.6" ry="1.7" fill="#633806"/><ellipse cx="26" cy="15" rx="1.6" ry="1.7" fill="#633806"/><path d="M8.600000000000001 9.2 Q11.4 7.8 14.2 8.8" fill="none" stroke="#633806" stroke-width="1.1" stroke-linecap="round"/><path d="M27.400000000000002 9.2 Q24.6 7.8 21.8 8.8" fill="none" stroke="#633806" stroke-width="1.1" stroke-linecap="round"/><path d="M11.6 25.6 Q20 27.6 25.4 21.6" fill="none" stroke="#633806" stroke-width="1.6" stroke-linecap="round"/></svg></div>
<div class="em" style="left:117.15px;top:199.5px"><svg width="21" height="21" viewBox="0 0 36 36" style="overflow:visible"><circle cx="18" cy="18" r="17.2" fill="url(#gy)"/><circle cx="18" cy="18" r="17.2" fill="url(#gsh)"/><ellipse cx="18" cy="7.4" rx="11" ry="5.6" fill="url(#ghl)"/><path d="M7.4 14 L14.2 14.6" stroke="#633806" stroke-width="1.2" stroke-linecap="round"/><path d="M21.8 14.6 L28.6 14" stroke="#633806" stroke-width="1.2" stroke-linecap="round"/><ellipse cx="12.6" cy="15.6" rx="1.6" ry="1.6" fill="#633806"/><ellipse cx="26.4" cy="15.6" rx="1.6" ry="1.6" fill="#633806"/><path d="M8.600000000000001 9.5 Q11.4 8.8 14.2 10.5" fill="none" stroke="#633806" stroke-width="1.1" stroke-linecap="round"/><path d="M27.400000000000002 9.5 Q24.6 8.8 21.8 10.5" fill="none" stroke="#633806" stroke-width="1.1" stroke-linecap="round"/><path d="M13.2 26.6 Q18 22.6 22.8 26.6" fill="none" stroke="#633806" stroke-width="1.9" stroke-linecap="round"/></svg></div>
<div class="em" style="left:153.40px;top:199.5px"><svg width="21" height="21" viewBox="0 0 36 36" style="overflow:visible"><circle cx="18" cy="18" r="17.2" fill="url(#gy)"/><circle cx="18" cy="18" r="17.2" fill="url(#gsh)"/><ellipse cx="18" cy="7.4" rx="11" ry="5.6" fill="url(#ghl)"/><path d="M9.2 14.5 Q12 18.46 14.8 14.5" fill="none" stroke="#633806" stroke-width="2.0" stroke-linecap="round"/><path d="M21.2 14.5 Q24 18.46 26.8 14.5" fill="none" stroke="#633806" stroke-width="2.0" stroke-linecap="round"/><path d="M8.6 11.2 Q11.2 9.0 13.799999999999999 9.2" fill="none" stroke="#633806" stroke-width="1.1" stroke-linecap="round"/><path d="M27.400000000000002 11.2 Q24.8 9.0 22.2 9.2" fill="none" stroke="#633806" stroke-width="1.1" stroke-linecap="round"/><path d="M13 26.6 Q18 22.200000000000003 23 26.6" fill="none" stroke="#633806" stroke-width="1.9" stroke-linecap="round"/></svg></div>
<div class="em" style="left:8.40px;top:227.5px"><svg width="21" height="21" viewBox="0 0 36 36" style="overflow:visible"><circle cx="18" cy="18" r="17.2" fill="url(#gy)"/><circle cx="18" cy="18" r="17.2" fill="url(#gsh)"/><ellipse cx="18" cy="7.4" rx="11" ry="5.6" fill="url(#ghl)"/><path d="M9.2 15.2 Q12 18.8 14.8 15.2" fill="none" stroke="#633806" stroke-width="2.0" stroke-linecap="round"/><path d="M21.2 15.2 Q24 18.8 26.8 15.2" fill="none" stroke="#633806" stroke-width="2.0" stroke-linecap="round"/><path d="M8.399999999999999 12.0 Q11.2 9.4 14.0 9.2" fill="none" stroke="#633806" stroke-width="1.1" stroke-linecap="round"/><path d="M27.6 12.0 Q24.8 9.4 22.0 9.2" fill="none" stroke="#633806" stroke-width="1.1" stroke-linecap="round"/><path d="M14.4 26 L21.6 26" fill="none" stroke="#633806" stroke-width="1.5" stroke-linecap="round"/></svg></div>
<div class="em" style="left:44.65px;top:227.5px"><svg width="21" height="21" viewBox="0 0 36 36" style="overflow:visible"><circle cx="18" cy="18" r="17.2" fill="url(#gy)"/><circle cx="18" cy="18" r="17.2" fill="url(#gsh)"/><ellipse cx="18" cy="7.4" rx="11" ry="5.6" fill="url(#ghl)"/><ellipse cx="12.8" cy="15.4" rx="1.8" ry="2.5" fill="#633806"/><ellipse cx="23.2" cy="15.4" rx="1.8" ry="2.5" fill="#633806"/><path d="M8.600000000000001 10.799999999999999 Q11.4 7.999999999999999 14.2 7.6" fill="none" stroke="#633806" stroke-width="1.2" stroke-linecap="round"/><path d="M27.400000000000002 10.799999999999999 Q24.6 7.999999999999999 21.8 7.6" fill="none" stroke="#633806" stroke-width="1.2" stroke-linecap="round"/><path d="M12.4 27.4 Q18 22.2 23.6 27.4" fill="none" stroke="#633806" stroke-width="1.9" stroke-linecap="round"/></svg></div>
<div class="em" style="left:80.90px;top:227.5px"><svg width="21" height="21" viewBox="0 0 36 36" style="overflow:visible"><circle cx="18" cy="18" r="17.2" fill="url(#gy)"/><circle cx="18" cy="18" r="17.2" fill="url(#gsh)"/><ellipse cx="18" cy="7.4" rx="11" ry="5.6" fill="url(#ghl)"/><ellipse cx="12.8" cy="14.4" rx="1.8" ry="2.6" fill="#633806"/><ellipse cx="23.2" cy="14.4" rx="1.8" ry="2.6" fill="#633806"/><path d="M12 26.4 Q18 23.6 24.4 24.6" fill="none" stroke="#633806" stroke-width="1.6" stroke-linecap="round"/></svg></div>
<div class="em" style="left:117.15px;top:227.5px"><svg width="21" height="21" viewBox="0 0 36 36" style="overflow:visible"><circle cx="18" cy="18" r="17.2" fill="url(#gy)"/><circle cx="18" cy="18" r="17.2" fill="url(#gsh)"/><ellipse cx="18" cy="7.4" rx="11" ry="5.6" fill="url(#ghl)"/><ellipse cx="12.8" cy="14.2" rx="1.8" ry="2.6" fill="#633806"/><ellipse cx="23.2" cy="14.2" rx="1.8" ry="2.6" fill="#633806"/><path d="M12.6 26.4 Q18 22.799999999999997 23.4 26.4" fill="none" stroke="#633806" stroke-width="1.9" stroke-linecap="round"/></svg></div>
<div class="em" style="left:153.40px;top:227.5px"><svg width="21" height="21" viewBox="0 0 36 36" style="overflow:visible"><circle cx="18" cy="18" r="17.2" fill="url(#gy)"/><circle cx="18" cy="18" r="17.2" fill="url(#gsh)"/><ellipse cx="18" cy="7.4" rx="11" ry="5.6" fill="url(#ghl)"/><ellipse cx="12.8" cy="13.8" rx="1.9" ry="2.7" fill="#633806"/><ellipse cx="23.2" cy="13.8" rx="1.9" ry="2.7" fill="#633806"/><path d="M11 27.4 Q18 21.0 25 27.4" fill="none" stroke="#633806" stroke-width="1.9" stroke-linecap="round"/></svg></div>
<div class="em" style="left:8.40px;top:255.5px"><svg width="21" height="21" viewBox="0 0 36 36" style="overflow:visible"><circle cx="18" cy="18" r="17.2" fill="url(#gy)"/><circle cx="18" cy="18" r="17.2" fill="url(#gsh)"/><ellipse cx="18" cy="7.4" rx="11" ry="5.6" fill="url(#ghl)"/><path d="M9.2 13.8 L14.24 16 L9.2 18.2" fill="none" stroke="#633806" stroke-width="1.9" stroke-linecap="round" stroke-linejoin="round"/><path d="M26.8 13.8 L21.76 16 L26.8 18.2" fill="none" stroke="#633806" stroke-width="1.9" stroke-linecap="round" stroke-linejoin="round"/><path d="M8.8 11.2 Q11.4 8.8 14.0 8.8" fill="none" stroke="#633806" stroke-width="1.1" stroke-linecap="round"/><path d="M27.200000000000003 11.2 Q24.6 8.8 22.0 8.8" fill="none" stroke="#633806" stroke-width="1.1" stroke-linecap="round"/><path d="M12.6 27.6 Q18 22.8 23.4 27.6" fill="none" stroke="#633806" stroke-width="1.9" stroke-linecap="round"/></svg></div>
<div class="em" style="left:44.65px;top:255.5px"><svg width="21" height="21" viewBox="0 0 36 36" style="overflow:visible"><circle cx="18" cy="18" r="17.2" fill="url(#gy)"/><circle cx="18" cy="18" r="17.2" fill="url(#gsh)"/><ellipse cx="18" cy="7.4" rx="11" ry="5.6" fill="url(#ghl)"/><path d="M9.2 13.8 L14.24 16 L9.2 18.2" fill="none" stroke="#633806" stroke-width="1.9" stroke-linecap="round" stroke-linejoin="round"/><path d="M26.8 13.8 L21.76 16 L26.8 18.2" fill="none" stroke="#633806" stroke-width="1.9" stroke-linecap="round" stroke-linejoin="round"/><path d="M8.8 10.8 Q11.4 8.8 14.0 9.2" fill="none" stroke="#633806" stroke-width="1.1" stroke-linecap="round"/><path d="M27.200000000000003 10.8 Q24.6 8.8 22.0 9.2" fill="none" stroke="#633806" stroke-width="1.1" stroke-linecap="round"/><path d="M9.6 27.8 L12.4 25.4 L15.2 27.8 L18 25.4 L20.8 27.8 L23.6 25.4 L26.4 27.8" fill="none" stroke="#633806" stroke-width="1.5" stroke-linecap="round" stroke-linejoin="round"/></svg></div>
<div class="em" style="left:80.90px;top:255.5px"><svg width="21" height="21" viewBox="0 0 36 36" style="overflow:visible"><circle cx="18" cy="18" r="17.2" fill="url(#gy)"/><circle cx="18" cy="18" r="17.2" fill="url(#gsh)"/><ellipse cx="18" cy="7.4" rx="11" ry="5.6" fill="url(#ghl)"/><path d="M8.8 9.6 L14.200000000000001 12 L8.8 14.4" fill="none" stroke="#633806" stroke-width="1.9" stroke-linecap="round" stroke-linejoin="round"/><path d="M27.2 9.6 L21.799999999999997 12 L27.2 14.4" fill="none" stroke="#633806" stroke-width="1.9" stroke-linecap="round" stroke-linejoin="round"/><path d="M8.600000000000001 7.4 Q11.4 5.0 14.2 5.0" fill="none" stroke="#633806" stroke-width="1.1" stroke-linecap="round"/><path d="M27.400000000000002 7.4 Q24.6 5.0 21.8 5.0" fill="none" stroke="#633806" stroke-width="1.1" stroke-linecap="round"/><path d="M8.6 30 Q9.6 19.6 18 19.6 Q26.4 19.6 27.4 30 Q18 26.8 8.6 30Z" fill="url(#gm)"/><path d="M10 24.6 Q18 19 26 24.6 Q18 21.8 10 24.6Z" fill="#fff"/></svg></div>
<div class="em" style="left:117.15px;top:255.5px"><svg width="21" height="21" viewBox="0 0 36 36" style="overflow:visible"><circle cx="18" cy="18" r="17.2" fill="url(#gy)"/><circle cx="18" cy="18" r="17.2" fill="url(#gsh)"/><ellipse cx="18" cy="7.4" rx="11" ry="5.6" fill="url(#ghl)"/><path d="M8.399999999999999 14.5 Q11.6 9.819999999999999 14.8 14.5" fill="none" stroke="#633806" stroke-width="1.5" stroke-linecap="round"/><path d="M21.2 14.5 Q24.4 9.819999999999999 27.599999999999998 14.5" fill="none" stroke="#633806" stroke-width="1.5" stroke-linecap="round"/><path d="M8.2 8.8 Q11.2 6.0 14.2 5.6" fill="none" stroke="#633806" stroke-width="1.1" stroke-linecap="round"/><path d="M27.8 8.8 Q24.8 6.0 21.8 5.6" fill="none" stroke="#633806" stroke-width="1.1" stroke-linecap="round"/><path d="M8.6 30 Q9.6 19.6 18 19.6 Q26.4 19.6 27.4 30 Q18 26.8 8.6 30Z" fill="url(#gm)"/><path d="M10 24.6 Q18 19 26 24.6 Q18 21.8 10 24.6Z" fill="#fff"/></svg></div>
<div class="em" style="left:153.40px;top:255.5px"><svg width="21" height="21" viewBox="0 0 36 36" style="overflow:visible"><circle cx="18" cy="18" r="17.2" fill="url(#gy)"/><circle cx="18" cy="18" r="17.2" fill="url(#gsh)"/><ellipse cx="18" cy="7.4" rx="11" ry="5.6" fill="url(#ghl)"/><circle cx="10.6" cy="16.8" r="5.7" fill="#3a2208"/><circle cx="25.4" cy="16.8" r="5.7" fill="#3a2208"/><circle cx="9" cy="14.6" r="2.4" fill="#fff"/><circle cx="23.8" cy="14.6" r="2.4" fill="#fff"/><circle cx="12.6" cy="19.2" r="1.4" fill="#fff"/><circle cx="27.4" cy="19.2" r="1.4" fill="#fff"/><path d="M8 10.0 Q11 7.2 14 6.800000000000001" fill="none" stroke="#633806" stroke-width="1.1" stroke-linecap="round"/><path d="M28 10.0 Q25 7.2 22 6.800000000000001" fill="none" stroke="#633806" stroke-width="1.1" stroke-linecap="round"/><path d="M15 28.4 Q18 25.2 21 28.4" fill="none" stroke="#633806" stroke-width="1.4" stroke-linecap="round"/></svg></div>
<div class="em" style="left:8.40px;top:283.5px"><svg width="21" height="21" viewBox="0 0 36 36" style="overflow:visible"><circle cx="18" cy="18" r="17.2" fill="url(#gy)"/><circle cx="18" cy="18" r="17.2" fill="url(#gsh)"/><ellipse cx="18" cy="7.4" rx="11" ry="5.6" fill="url(#ghl)"/><ellipse cx="12.6" cy="15" rx="1.8" ry="2.5" fill="#633806"/><ellipse cx="23.4" cy="15" rx="1.8" ry="2.5" fill="#633806"/><path d="M8.600000000000001 10.6 Q11.4 7.8 14.2 7.4" fill="none" stroke="#633806" stroke-width="1.2" stroke-linecap="round"/><path d="M27.400000000000002 10.6 Q24.6 7.8 21.8 7.4" fill="none" stroke="#633806" stroke-width="1.2" stroke-linecap="round"/><path d="M13.4 27.2 Q18 22.799999999999997 22.6 27.2" fill="none" stroke="#633806" stroke-width="1.9" stroke-linecap="round"/><path d="M10.6 18.5 Q16.68 27.24 10.6 31.799999999999997 Q4.52 27.24 10.6 18.5Z" fill="url(#gt)"/></svg></div>
<div class="em" style="left:44.65px;top:283.5px"><svg width="21" height="21" viewBox="0 0 36 36" style="overflow:visible"><circle cx="18" cy="18" r="17.2" fill="url(#gy)"/><circle cx="18" cy="18" r="17.2" fill="url(#gsh)"/><ellipse cx="18" cy="7.4" rx="11" ry="5.6" fill="url(#ghl)"/><path d="M8.6 11.1 Q11.6 15.059999999999999 14.6 11.1" fill="none" stroke="#633806" stroke-width="1.5" stroke-linecap="round"/><path d="M21.4 11.1 Q24.4 15.059999999999999 27.4 11.1" fill="none" stroke="#633806" stroke-width="1.5" stroke-linecap="round"/><path d="M8.399999999999999 8.6 Q11.2 6.0 14.0 5.800000000000001" fill="none" stroke="#633806" stroke-width="1.1" stroke-linecap="round"/><path d="M27.6 8.6 Q24.8 6.0 22.0 5.800000000000001" fill="none" stroke="#633806" stroke-width="1.1" stroke-linecap="round"/><path d="M8.6 14.4 L14 14.4 L14.6 33 Q11.5 35 8 32.6Z" fill="url(#gt)"/><path d="M22 14.4 L27.4 14.4 L28 32.6 Q24.5 35 21.4 33Z" fill="url(#gt)"/><ellipse cx="18" cy="25" rx="3.6" ry="4.4" fill="url(#gm)"/><path d="M15.4 22.6 Q18 20.4 20.6 22.6 Q18 22 15.4 22.6Z" fill="#fff"/></svg></div>
<div class="em" style="left:80.90px;top:283.5px"><svg width="21" height="21" viewBox="0 0 36 36" style="overflow:visible"><circle cx="18" cy="18" r="17.2" fill="url(#gy)"/><circle cx="18" cy="18" r="17.2" fill="url(#gsh)"/><ellipse cx="18" cy="7.4" rx="11" ry="5.6" fill="url(#ghl)"/><path d="M9.0 13.2 Q11.8 16.8 14.600000000000001 13.2" fill="none" stroke="#633806" stroke-width="1.5" stroke-linecap="round"/><path d="M21.4 13.2 Q24.2 16.8 27.0 13.2" fill="none" stroke="#633806" stroke-width="1.5" stroke-linecap="round"/><path d="M8.8 7.3999999999999995 Q12 9.2 15.2 11.0" fill="none" stroke="#633806" stroke-width="1.3" stroke-linecap="round"/><path d="M27.2 7.3999999999999995 Q24 9.2 20.8 11.0" fill="none" stroke="#633806" stroke-width="1.3" stroke-linecap="round"/><path d="M13.6 24.6 Q18 21.400000000000002 22.4 24.6" fill="none" stroke="#633806" stroke-width="1.4" stroke-linecap="round"/><path d="M11.4 24.4 Q4 23 2 29 Q1 34 6.4 34.4 Q12 34.6 12.6 29Z" fill="#f4f4f4"/><path d="M24.6 24.4 Q32 23 34 29 Q35 34 29.6 34.4 Q24 34.6 23.4 29Z" fill="#f4f4f4"/></svg></div>
<div class="em" style="left:117.15px;top:283.5px"><svg width="21" height="21" viewBox="0 0 36 36" style="overflow:visible"><circle cx="18" cy="18" r="17.2" fill="url(#gy)"/><circle cx="18" cy="18" r="17.2" fill="url(#gsh)"/><ellipse cx="18" cy="7.4" rx="11" ry="5.6" fill="url(#ghl)"/><ellipse cx="12.8" cy="17.8" rx="1.6" ry="2.0" fill="#633806"/><ellipse cx="23.2" cy="17.8" rx="1.6" ry="2.0" fill="#633806"/><path d="M9.1 11.7 Q12.2 13.6 15.299999999999999 15.5" fill="none" stroke="#633806" stroke-width="1.5" stroke-linecap="round"/><path d="M26.900000000000002 11.7 Q23.8 13.6 20.7 15.5" fill="none" stroke="#633806" stroke-width="1.5" stroke-linecap="round"/><path d="M14.1 27.2 Q18 23.4 21.9 27.2" fill="none" stroke="#633806" stroke-width="1.9" stroke-linecap="round"/></svg></div>
<div class="em" style="left:153.40px;top:283.5px"><svg width="21" height="21" viewBox="0 0 36 36" style="overflow:visible"><circle cx="18" cy="18" r="17.2" fill="url(#gr)"/><ellipse cx="12.8" cy="17.8" rx="1.6" ry="2.0" fill="#4a1208"/><ellipse cx="23.2" cy="17.8" rx="1.6" ry="2.0" fill="#4a1208"/><path d="M9.1 11.7 Q12.2 13.6 15.299999999999999 15.5" fill="none" stroke="#4a1208" stroke-width="1.5" stroke-linecap="round"/><path d="M26.900000000000002 11.7 Q23.8 13.6 20.7 15.5" fill="none" stroke="#4a1208" stroke-width="1.5" stroke-linecap="round"/><path d="M14.1 27.2 Q18 23.4 21.9 27.2" fill="none" stroke="#4a1208" stroke-width="1.9" stroke-linecap="round"/></svg></div>
<div class="em" style="left:8.40px;top:311.5px"><svg width="21" height="21" viewBox="0 0 36 36" style="overflow:visible"><circle cx="18" cy="18" r="17.2" fill="url(#gr)"/><ellipse cx="12.2" cy="14.6" rx="1.7" ry="2.1" fill="#3a0c06"/><ellipse cx="23.8" cy="14.6" rx="1.7" ry="2.1" fill="#3a0c06"/><path d="M8.4 7.8 Q11.8 10 15.200000000000001 12.2" fill="none" stroke="#3a0c06" stroke-width="1.5" stroke-linecap="round"/><path d="M27.599999999999998 7.8 Q24.2 10 20.8 12.2" fill="none" stroke="#3a0c06" stroke-width="1.5" stroke-linecap="round"/><rect x="3" y="19.6" width="30" height="7.6" rx="1.6" fill="#151515"/><text x="18" y="25.8" font-family="'Liberation Sans',sans-serif" font-size="6.6" font-weight="bold" fill="#fff" text-anchor="middle">&amp;$!#%</text></svg></div>
<div class="em" style="left:44.65px;top:311.5px"><svg width="21" height="21" viewBox="0 0 36 36" style="overflow:visible"><path d="M0.8 19 A17.2 17.2 0 0 0 35.2 19 L35.2 15 L0.8 15Z" fill="url(#gy)"/><path d="M5 15 Q-0.5 9 5.4 6.4 Q4.6 0.6 11.4 2.2 Q14 -1.6 18.4 1.2 Q23.4 -1.8 26 2.6 Q32.4 1.4 31.4 7 Q36.4 10 31 15Z" fill="#f1e9df"/><path d="M8 14 Q9 9 14 8.6 Q16 4.4 20.6 6.6 Q25.6 5.4 26 10 Q29.6 11 28 14Z" fill="#e8904a" opacity="0.75"/><path d="M12 14 Q13 11 16.6 11 Q19 8.6 22 11 Q25 11.4 24.6 14Z" fill="#ffd23a" opacity="0.8"/><circle cx="3" cy="3" r="0.8" fill="#e8b04a"/><circle cx="33" cy="2.4" r="0.8" fill="#e8b04a"/><circle cx="35" cy="9" r="0.6" fill="#e8b04a"/><circle cx="1" cy="10" r="0.6" fill="#e8b04a"/><ellipse cx="12.4" cy="21.6" rx="1.7" ry="2.2" fill="#633806"/><ellipse cx="23.6" cy="21.6" rx="1.7" ry="2.2" fill="#633806"/><path d="M8.8 18.2 Q11.6 16.2 14.399999999999999 16.599999999999998" fill="none" stroke="#633806" stroke-width="1.1" stroke-linecap="round"/><path d="M27.2 18.2 Q24.4 16.2 21.599999999999998 16.599999999999998" fill="none" stroke="#633806" stroke-width="1.1" stroke-linecap="round"/><path d="M12.6 31 Q13.4 25.6 18 25.6 Q22.6 25.6 23.4 31 Q18 29 12.6 31Z" fill="url(#gm)"/></svg></div>
<div class="em" style="left:80.90px;top:311.5px"><svg width="21" height="21" viewBox="0 0 36 36" style="overflow:visible"><circle cx="18" cy="18" r="17.2" fill="url(#gy)"/><circle cx="18" cy="18" r="17.2" fill="url(#gsh)"/><ellipse cx="18" cy="7.4" rx="11" ry="5.6" fill="url(#ghl)"/><ellipse cx="9.4" cy="24.6" rx="4.4" ry="2.8" fill="#ff5a3a" opacity="0.45"/><ellipse cx="26.6" cy="24.6" rx="4.4" ry="2.8" fill="#ff5a3a" opacity="0.45"/><circle cx="10.6" cy="15.4" r="5.6" fill="#fff"/><circle cx="25.4" cy="15.4" r="5.6" fill="#fff"/><circle cx="10.6" cy="15.4" r="2.6" fill="#3a2208"/><circle cx="25.4" cy="15.4" r="2.6" fill="#3a2208"/><path d="M7.6 7.6 Q10.6 5.8 13.6 6.4" fill="none" stroke="#633806" stroke-width="1.1" stroke-linecap="round"/><path d="M28.4 7.6 Q25.4 5.8 22.4 6.4" fill="none" stroke="#633806" stroke-width="1.1" stroke-linecap="round"/><path d="M14.6 28 L21.4 28" fill="none" stroke="#633806" stroke-width="1.4" stroke-linecap="round"/></svg></div>
<div class="em" style="left:117.15px;top:311.5px"><svg width="21" height="21" viewBox="0 0 36 36" style="overflow:visible"><circle cx="18" cy="18" r="17.2" fill="url(#gro)"/><ellipse cx="12.4" cy="14.4" rx="1.7" ry="2.3" fill="#5a1a08"/><ellipse cx="23.6" cy="14.4" rx="1.7" ry="2.3" fill="#5a1a08"/><path d="M8.600000000000001 11.0 Q11.4 8.4 14.2 8.2" fill="none" stroke="#5a1a08" stroke-width="1.2" stroke-linecap="round"/><path d="M27.400000000000002 11.0 Q24.6 8.4 21.8 8.2" fill="none" stroke="#5a1a08" stroke-width="1.2" stroke-linecap="round"/><path d="M11 22.6 Q18 20.4 25 22.6 Q24 27 18 27 Q12 27 11 22.6Z" fill="#5a1a08"/><path d="M14.8 24 L22.400000000000002 24 L22.400000000000002 29.2 A3.8 3.8 0 0 1 14.8 29.2Z" fill="url(#gtg)"/><path d="M18.6 24.6 L18.6 28.95" stroke="#c4245e" stroke-width="0.7"/><path d="M5.4 15.6 Q10.200000000000001 22.5 5.4 26.1 Q0.5999999999999996 22.5 5.4 15.6Z" fill="url(#gt)"/><path d="M2.6 24.6 Q5.48 28.740000000000002 2.6 30.900000000000002 Q-0.28000000000000025 28.740000000000002 2.6 24.6Z" fill="url(#gt)"/></svg></div>
<div class="em" style="left:153.40px;top:311.5px"><svg width="21" height="21" viewBox="0 0 36 36" style="overflow:visible"><circle cx="18" cy="18" r="17.2" fill="url(#gb)"/><ellipse cx="12.4" cy="14" rx="1.5" ry="1.9" fill="#1f3f8a"/><ellipse cx="23.6" cy="14" rx="1.5" ry="1.9" fill="#1f3f8a"/><path d="M8.600000000000001 10.4 Q11.4 8.200000000000001 14.2 8.4" fill="none" stroke="#1f3f8a" stroke-width="1.1" stroke-linecap="round"/><path d="M27.400000000000002 10.4 Q24.6 8.200000000000001 21.8 8.4" fill="none" stroke="#1f3f8a" stroke-width="1.1" stroke-linecap="round"/><rect x="7" y="18.6" width="22" height="8.4" rx="3.4" fill="#fff" stroke="#2a4fa0" stroke-width="0.9"/><path d="M7.6 22.8 L28.4 22.8 M11.4 19 L11.4 26.6 M15.8 19 L15.8 26.6 M20.2 19 L20.2 26.6 M24.6 19 L24.6 26.6" stroke="#7fa0d8" stroke-width="0.6"/><path d="M2 22 L3.4 30 L5 23Z M6 27.6 L7.4 35 L9 29.6Z M27 29.6 L28.6 35 L30 27.6Z M31 23 L32.6 30 L34 22Z M11 31.6 L12 35.6 L13.4 32.6Z M23 32.6 L24 35.6 L25.4 31.6Z" fill="#bfe4ff"/><path d="M4 8 Q10 1 18 1 Q26 1 32 8 Q25 4.4 18 4.4 Q11 4.4 4 8Z" fill="#d8f0ff" opacity="0.7"/></svg></div>
<div class="em" style="left:8.40px;top:339.5px"><svg width="21" height="21" viewBox="0 0 36 36" style="overflow:visible"><circle cx="18" cy="18" r="17.2" fill="url(#gf)"/><ellipse cx="11.4" cy="13.6" rx="3.6" ry="4.4" fill="#fff"/><ellipse cx="24.6" cy="13.6" rx="3.6" ry="4.4" fill="#fff"/><circle cx="11.4" cy="14" r="1.3" fill="#2a1a08"/><circle cx="24.6" cy="14" r="1.3" fill="#2a1a08"/><path d="M8.399999999999999 7.4 Q11.2 5.2 14.0 5.4" fill="none" stroke="#3a4a8a" stroke-width="1.0" stroke-linecap="round"/><path d="M27.6 7.4 Q24.8 5.2 22.0 5.4" fill="none" stroke="#3a4a8a" stroke-width="1.0" stroke-linecap="round"/><path d="M14 30.6 Q13.4 20 18 20 Q22.6 20 22 30.6 Q18 32.6 14 30.6Z" fill="url(#gm)"/><path d="M15.6 22 Q18 20.6 20.4 22 Q18 21.6 15.6 22Z" fill="#fff"/><path d="M3 36 Q0.6 27 4.4 20.4 Q6.4 17.6 8 20 L10.6 27.6 Q12.4 31 10 36Z" fill="#fbb31c" stroke="#e8930c" stroke-width="0.5"/><path d="M33 36 Q35.4 27 31.6 20.4 Q29.6 17.6 28 20 L25.4 27.6 Q23.6 31 26 36Z" fill="#fbb31c" stroke="#e8930c" stroke-width="0.5"/></svg></div>
<div class="em" style="left:44.65px;top:339.5px"><svg width="21" height="21" viewBox="0 0 36 36" style="overflow:visible"><circle cx="18" cy="18" r="17.2" fill="url(#gf)"/><circle cx="11.8" cy="15.6" r="2.7" fill="#fff"/><circle cx="24.2" cy="15.6" r="2.7" fill="#fff"/><circle cx="11.8" cy="15.8" r="1.6" fill="#2a1a08"/><circle cx="24.2" cy="15.8" r="1.6" fill="#2a1a08"/><path d="M8.399999999999999 11.799999999999999 Q11.2 9.4 14.0 9.4" fill="none" stroke="#4a4a6a" stroke-width="1.1" stroke-linecap="round"/><path d="M27.6 11.799999999999999 Q24.8 9.4 22.0 9.4" fill="none" stroke="#4a4a6a" stroke-width="1.1" stroke-linecap="round"/><path d="M12.4 29.4 Q13 23.6 18 23.6 Q23 23.6 23.6 29.4 Q18 27.6 12.4 29.4Z" fill="url(#gm)"/></svg></div>
<div class="em" style="left:80.90px;top:339.5px"><svg width="21" height="21" viewBox="0 0 36 36" style="overflow:visible"><circle cx="18" cy="18" r="17.2" fill="url(#gf)"/><circle cx="12" cy="16" r="2.6" fill="#fff"/><circle cx="24.6" cy="16" r="2.6" fill="#fff"/><circle cx="12" cy="16.2" r="1.5" fill="#2a1a08"/><circle cx="24.6" cy="16.2" r="1.5" fill="#2a1a08"/><path d="M8.399999999999999 12.2 Q11.2 9.8 14.0 9.8" fill="none" stroke="#4a4a6a" stroke-width="1.1" stroke-linecap="round"/><path d="M27.6 12.2 Q24.8 9.8 22.0 9.8" fill="none" stroke="#4a4a6a" stroke-width="1.1" stroke-linecap="round"/><path d="M13 29 Q13.6 24.4 18.4 24.4 Q23.2 24.4 23.8 29 Q18.4 27.4 13 29Z" fill="url(#gm)"/><path d="M5.6 18 Q11.68 26.74 5.6 31.299999999999997 Q-0.4800000000000004 26.74 5.6 18Z" fill="url(#gt)"/></svg></div>
<div class="em" style="left:117.15px;top:339.5px"><svg width="21" height="21" viewBox="0 0 36 36" style="overflow:visible"><circle cx="18" cy="18" r="17.2" fill="url(#gy)"/><circle cx="18" cy="18" r="17.2" fill="url(#gsh)"/><ellipse cx="18" cy="7.4" rx="11" ry="5.6" fill="url(#ghl)"/><ellipse cx="12.6" cy="16" rx="1.7" ry="2.3" fill="#633806"/><ellipse cx="23.4" cy="16" rx="1.7" ry="2.3" fill="#633806"/><path d="M8.600000000000001 11.8 Q11.4 8.8 14.2 8.2" fill="none" stroke="#633806" stroke-width="1.2" stroke-linecap="round"/><path d="M27.400000000000002 11.8 Q24.6 8.8 21.8 8.2" fill="none" stroke="#633806" stroke-width="1.2" stroke-linecap="round"/><path d="M13.4 27.2 Q18 22.799999999999997 22.6 27.2" fill="none" stroke="#633806" stroke-width="1.9" stroke-linecap="round"/><path d="M5.4 17 Q11.48 25.74 5.4 30.299999999999997 Q-0.6799999999999997 25.74 5.4 17Z" fill="url(#gt)"/></svg></div>
<div class="em" style="left:153.40px;top:339.5px"><svg width="21" height="21" viewBox="0 0 36 36" style="overflow:visible"><circle cx="18" cy="18" r="17.2" fill="url(#gy)"/><circle cx="18" cy="18" r="17.2" fill="url(#gsh)"/><ellipse cx="18" cy="7.4" rx="11" ry="5.6" fill="url(#ghl)"/><path d="M9.2 16.0 Q12 19.6 14.8 16.0" fill="none" stroke="#633806" stroke-width="1.5" stroke-linecap="round"/><path d="M21.2 16.0 Q24 19.6 26.8 16.0" fill="none" stroke="#633806" stroke-width="1.5" stroke-linecap="round"/><path d="M8.6 13 Q11.2 10.8 13.799999999999999 11" fill="none" stroke="#633806" stroke-width="1.1" stroke-linecap="round"/><path d="M27.400000000000002 13 Q24.8 10.8 22.2 11" fill="none" stroke="#633806" stroke-width="1.1" stroke-linecap="round"/><path d="M13 27.6 Q18 22.8 23 27.6" fill="none" stroke="#633806" stroke-width="1.9" stroke-linecap="round"/><path d="M7.6 -3.4 Q14.32 6.26 7.6 11.3 Q0.879999999999999 6.26 7.6 -3.4Z" fill="url(#gt)"/></svg></div>
<div class="em" style="left:8.40px;top:367.5px"><svg width="21" height="21" viewBox="0 0 36 36" style="overflow:visible"><circle cx="18" cy="18" r="17.2" fill="url(#gy)"/><circle cx="18" cy="18" r="17.2" fill="url(#gsh)"/><ellipse cx="18" cy="7.4" rx="11" ry="5.6" fill="url(#ghl)"/><path d="M9 14.5 Q12 9.1 15 14.5" fill="none" stroke="#633806" stroke-width="2.0" stroke-linecap="round"/><path d="M21 14.5 Q24 9.1 27 14.5" fill="none" stroke="#633806" stroke-width="2.0" stroke-linecap="round"/><path d="M10.6 19.4 Q18 28.2 25.4 19.4" fill="none" stroke="#633806" stroke-width="1.9" stroke-linecap="round"/><ellipse cx="7.800000000000001" cy="19.6" rx="3" ry="2" fill="#ff7a3a" opacity="0.35"/><ellipse cx="28.2" cy="19.6" rx="3" ry="2" fill="#ff7a3a" opacity="0.35"/><g transform="translate(6 30.6) rotate(-20) scale(1.05)"><path d="M-4 3 Q-5 -2 -2.4 -3 L-2 -6.2 Q-1.2 -7.2 -0.4 -6.2 L0 -3.4 L0.4 -7 Q1.2 -8 2 -7 L2.2 -3.2 L3 -6 Q3.8 -6.8 4.4 -5.8 L4 -1 Q5 2 3 4.2 Q0 6 -4 3Z" fill="#fbb31c" stroke="#e08a08" stroke-width="0.6"/></g><g transform="translate(30 30.6) rotate(20) scale(1.05)"><path d="M-4 3 Q-5 -2 -2.4 -3 L-2 -6.2 Q-1.2 -7.2 -0.4 -6.2 L0 -3.4 L0.4 -7 Q1.2 -8 2 -7 L2.2 -3.2 L3 -6 Q3.8 -6.8 4.4 -5.8 L4 -1 Q5 2 3 4.2 Q0 6 -4 3Z" fill="#fbb31c" stroke="#e08a08" stroke-width="0.6"/></g></svg></div>
<div class="em" style="left:44.65px;top:367.5px"><svg width="21" height="21" viewBox="0 0 36 36" style="overflow:visible"><circle cx="18" cy="18" r="17.2" fill="url(#gy)"/><circle cx="18" cy="18" r="17.2" fill="url(#gsh)"/><ellipse cx="18" cy="7.4" rx="11" ry="5.6" fill="url(#ghl)"/><ellipse cx="12.6" cy="14.4" rx="1.7" ry="2.3" fill="#633806"/><ellipse cx="23.4" cy="14.4" rx="1.7" ry="2.3" fill="#633806"/><path d="M8.4 9.6 Q11.4 6.6 15 8.6" fill="none" stroke="#633806" stroke-width="1.3" stroke-linecap="round"/><path d="M21 8 L27.4 8.6" stroke="#633806" stroke-width="1.3" stroke-linecap="round"/><path d="M13 23.6 Q18 21.6 22.6 22.4" fill="none" stroke="#633806" stroke-width="1.5" stroke-linecap="round"/><path d="M6.6 36 Q5 30 9.6 27 L19 23.4 Q21 23.4 20.4 25.4 L15 28.6 L21.6 28.4 Q23 29.6 21.4 31 Q19.6 36 13 36Z" fill="#fbb31c" stroke="#e08a08" stroke-width="0.6"/></svg></div>
<div class="em" style="left:80.90px;top:367.5px"><svg width="21" height="21" viewBox="0 0 36 36" style="overflow:visible"><circle cx="18" cy="18" r="17.2" fill="url(#gy)"/><circle cx="18" cy="18" r="17.2" fill="url(#gsh)"/><ellipse cx="18" cy="7.4" rx="11" ry="5.6" fill="url(#ghl)"/><ellipse cx="12.6" cy="13.6" rx="1.8" ry="2.6" fill="#633806"/><ellipse cx="23.4" cy="13.6" rx="1.8" ry="2.6" fill="#633806"/><path d="M9.4 8.8 Q12 7.2 14.6 8.0" fill="none" stroke="#633806" stroke-width="1.1" stroke-linecap="round"/><path d="M26.6 8.8 Q24 7.2 21.4 8.0" fill="none" stroke="#633806" stroke-width="1.1" stroke-linecap="round"/><ellipse cx="8" cy="19.6" rx="3" ry="2" fill="#ff7a3a" opacity="0.35"/><ellipse cx="28" cy="19.6" rx="3" ry="2" fill="#ff7a3a" opacity="0.35"/><path d="M10 31 Q8.6 24 14.6 21.6 L24 19.6 Q26 20 25 21.8 L27 21.4 Q28.6 22.4 27.4 24 Q29 25 27.6 26.6 Q28.6 28 26.8 29.4 Q24 33.6 17 33.4 Q12 33.4 10 31Z" fill="#fbb31c" stroke="#e08a08" stroke-width="0.6"/></svg></div>
<div class="em" style="left:117.15px;top:367.5px"><svg width="21" height="21" viewBox="0 0 36 36" style="overflow:visible"><circle cx="18" cy="18" r="17.2" fill="url(#gy)"/><circle cx="18" cy="18" r="17.2" fill="url(#gsh)"/><ellipse cx="18" cy="7.4" rx="11" ry="5.6" fill="url(#ghl)"/><ellipse cx="12.4" cy="13.6" rx="1.8" ry="2.5" fill="#633806"/><ellipse cx="23.6" cy="13.6" rx="1.8" ry="2.5" fill="#633806"/><path d="M9.2 8.6 Q12 6.8 14.8 7.4" fill="none" stroke="#633806" stroke-width="1.1" stroke-linecap="round"/><path d="M26.8 8.6 Q24 6.8 21.2 7.4" fill="none" stroke="#633806" stroke-width="1.1" stroke-linecap="round"/><ellipse cx="18" cy="24" rx="2.2" ry="2" fill="url(#gm)"/><path d="M16.4 35 L16 21 Q16.4 17.4 18.4 17.6 Q20.2 17.8 20.2 21 L20.4 27 Q24 26.4 24.6 29.6 Q25 34 22 35.6Z" fill="#fbb31c" stroke="#e08a08" stroke-width="0.6"/></svg></div>
<div class="em" style="left:153.40px;top:367.5px"><svg width="21" height="21" viewBox="0 0 36 36" style="overflow:visible"><circle cx="18" cy="18" r="17.2" fill="url(#gy)"/><circle cx="18" cy="18" r="17.2" fill="url(#gsh)"/><ellipse cx="18" cy="7.4" rx="11" ry="5.6" fill="url(#ghl)"/><ellipse cx="12.8" cy="14.4" rx="1.7" ry="2.3" fill="#633806"/><ellipse cx="23.2" cy="14.4" rx="1.7" ry="2.3" fill="#633806"/><path d="M8.600000000000001 11.0 Q11.4 8.200000000000001 14.2 7.800000000000001" fill="none" stroke="#633806" stroke-width="1.2" stroke-linecap="round"/><path d="M27.400000000000002 11.0 Q24.6 8.200000000000001 21.8 7.800000000000001" fill="none" stroke="#633806" stroke-width="1.2" stroke-linecap="round"/><path d="M10 27.6 Q15 25.4 20 27" fill="none" stroke="#633806" stroke-width="1.4" stroke-linecap="round"/><path d="M17 19.4 Q17.6 17.6 20 18.2 L35.4 22.4 Q36.6 24 35 25 L19.6 23.4 Q17 22.4 17 19.4Z" fill="#fcb81a" stroke="#e08a08" stroke-width="0.5"/></svg></div>
<div class="em" style="left:8.40px;top:395.5px"><svg width="21" height="21" viewBox="0 0 36 36" style="overflow:visible"><circle cx="18" cy="18" r="17.2" fill="url(#gy)"/><circle cx="18" cy="18" r="17.2" fill="url(#gsh)"/><ellipse cx="18" cy="7.4" rx="11" ry="5.6" fill="url(#ghl)"/></svg></div>
<div class="em" style="left:44.65px;top:395.5px"><svg width="21" height="21" viewBox="0 0 36 36" style="overflow:visible"><circle cx="18" cy="18" r="17.2" fill="url(#gy)"/><circle cx="18" cy="18" r="17.2" fill="url(#gsh)"/><ellipse cx="18" cy="7.4" rx="11" ry="5.6" fill="url(#ghl)"/></svg></div>
<div class="em" style="left:80.90px;top:395.5px"><svg width="21" height="21" viewBox="0 0 36 36" style="overflow:visible"><circle cx="18" cy="18" r="17.2" fill="url(#gy)"/><circle cx="18" cy="18" r="17.2" fill="url(#gsh)"/><ellipse cx="18" cy="7.4" rx="11" ry="5.6" fill="url(#ghl)"/></svg></div>
<div class="em" style="left:117.15px;top:395.5px"><svg width="21" height="21" viewBox="0 0 36 36" style="overflow:visible"><circle cx="18" cy="18" r="17.2" fill="url(#gy)"/><circle cx="18" cy="18" r="17.2" fill="url(#gsh)"/><ellipse cx="18" cy="7.4" rx="11" ry="5.6" fill="url(#ghl)"/></svg></div>
<div class="em" style="left:153.40px;top:395.5px"><svg width="21" height="21" viewBox="0 0 36 36" style="overflow:visible"><circle cx="18" cy="18" r="17.2" fill="url(#gy)"/><circle cx="18" cy="18" r="17.2" fill="url(#gsh)"/><ellipse cx="18" cy="7.4" rx="11" ry="5.6" fill="url(#ghl)"/></svg></div>
</div><div class="vd" style="left:460px"></div>
<div class="col" style="left:461px;width:151px">
<div style="position:absolute;left:36px;top:8px;width:1px;height:128px;background:#454545"></div>
<div style="position:absolute;left:114px;top:8px;width:1px;height:128px;background:#454545"></div>
<div style="position:absolute;left:11px;top:20px;width:128px;height:1px;background:#454545"></div>
<div style="position:absolute;left:11px;top:122px;width:128px;height:1px;background:#454545"></div>
<div style="position:absolute;left:11px;top:98px;width:128px;height:0;border-top:1px dotted #4a4a4a"></div>
<div style="position:absolute;left:38px;top:29px;width:74px;height:74px"><svg width="74" height="74" viewBox="0 0 36 36" style="overflow:visible"><circle cx="18" cy="18" r="17.2" fill="url(#gy)"/><circle cx="18" cy="18" r="17.2" fill="url(#gsh)"/><ellipse cx="18" cy="7.4" rx="11" ry="5.6" fill="url(#ghl)"/><ellipse cx="12.7" cy="14.4" rx="2.1" ry="2.9" fill="url(#gey)"/><ellipse cx="23.3" cy="14.4" rx="2.1" ry="2.9" fill="url(#gey)"/><path d="M6 20.2 Q18 22.4 30 20.2 Q28.2 30.799999999999997 18 30.799999999999997 Q7.800000000000001 30.799999999999997 6 20.2Z" fill="url(#gm)"/><path d="M6.8 20.8 Q18 23.0 29.2 20.8 L28.2 23.599999999999998 Q18 25.6 7.8 23.599999999999998Z" fill="url(#gte)"/></svg></div>
<div style="position:absolute;left:0;top:149px;width:150px;height:20px;line-height:20px;text-align:center;font-size:10.2px;font-weight:bold;color:#e4e4e4">笑っている顔</div>
<div style="position:absolute;left:27px;top:178px;width:94px;height:14px;border:1px solid #6a6a6a;border-radius:4px;line-height:15.5px;text-align:center;font-size:10.2px;font-weight:bold;color:#e4e4e4;white-space:nowrap">お気に入りに追加</div>
<div class="hd" style="left:0;top:210px;width:143px;padding-left:8px">フォントバリエーション</div>
<div class="em" style="left:8.5px;top:242.0px"><svg width="21" height="21" viewBox="0 0 36 36" style="overflow:visible"><circle cx="18" cy="18" r="17.2" fill="url(#gy)"/><circle cx="18" cy="18" r="17.2" fill="url(#gsh)"/><ellipse cx="18" cy="7.4" rx="11" ry="5.6" fill="url(#ghl)"/><ellipse cx="12.7" cy="14.4" rx="2.1" ry="2.9" fill="url(#gey)"/><ellipse cx="23.3" cy="14.4" rx="2.1" ry="2.9" fill="url(#gey)"/><path d="M6 20.2 Q18 22.4 30 20.2 Q28.2 30.799999999999997 18 30.799999999999997 Q7.800000000000001 30.799999999999997 6 20.2Z" fill="url(#gm)"/><path d="M6.8 20.8 Q18 23.0 29.2 20.8 L28.2 23.599999999999998 Q18 25.6 7.8 23.599999999999998Z" fill="url(#gte)"/></svg></div>
</div>
</div></body></html>
